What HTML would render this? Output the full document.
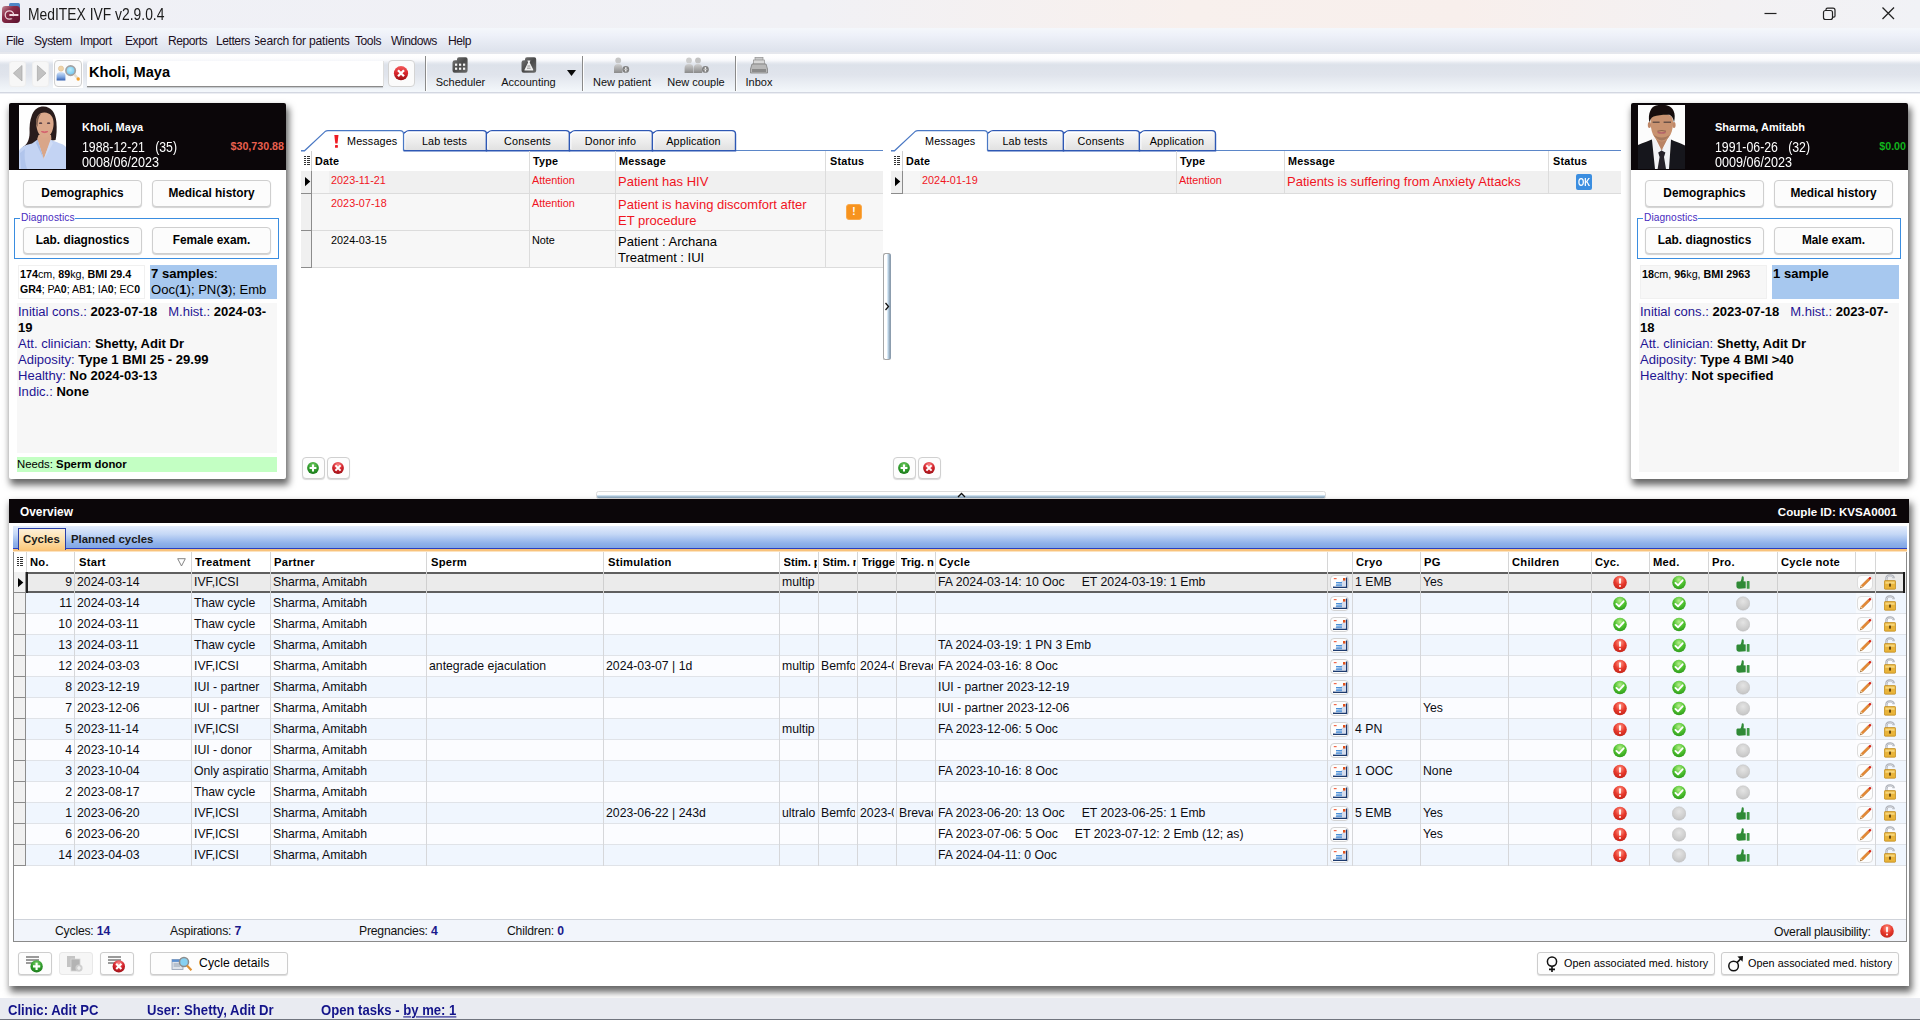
<!DOCTYPE html><html><head><meta charset="utf-8"><title>MedITEX IVF</title><style>
*{box-sizing:border-box;margin:0;padding:0}
html,body{width:1920px;height:1020px;overflow:hidden;background:#fff}
body{font-family:"Liberation Sans",sans-serif;font-size:12px;color:#000;position:relative}
.a{position:absolute;white-space:nowrap}
.t{position:absolute;white-space:nowrap;line-height:1}
.b{font-weight:bold}
.btn{position:absolute;background:#fcfcfc;border:1px solid #cfcfcf;border-radius:4px;box-shadow:0 1px 1px rgba(0,0,0,.18);text-align:center;font-weight:bold;white-space:nowrap}
.card{position:absolute;background:#fff;box-shadow:2px 5px 7px 1px rgba(0,0,0,.6)}
.hd{position:absolute;background:#0b0609}
.vl{position:absolute;width:1px;background:#d4d4d4}
.hl{position:absolute;height:1px;background:#d9d9d9}
.red{color:#f0141e}
.nv{color:#1f1493}
</style></head><body>
<svg width="0" height="0" style="position:absolute"><defs>
<radialGradient id="gR" cx="50%" cy="30%" r="70%"><stop offset="0" stop-color="#ff9a8a"/><stop offset=".55" stop-color="#e8392c"/><stop offset="1" stop-color="#c4261b"/></radialGradient>
<radialGradient id="gG" cx="50%" cy="30%" r="70%"><stop offset="0" stop-color="#b9f08f"/><stop offset=".55" stop-color="#4fc22f"/><stop offset="1" stop-color="#2f9c1c"/></radialGradient>
<radialGradient id="gY" cx="50%" cy="35%" r="70%"><stop offset="0" stop-color="#e4e4e4"/><stop offset="1" stop-color="#c2c2c2"/></radialGradient>
<radialGradient id="gG2" cx="50%" cy="30%" r="70%"><stop offset="0" stop-color="#7fd36f"/><stop offset=".6" stop-color="#2e9a2a"/><stop offset="1" stop-color="#1c7a1c"/></radialGradient>
<radialGradient id="gR2" cx="50%" cy="25%" r="75%"><stop offset="0" stop-color="#ff8c8c"/><stop offset=".55" stop-color="#d3232b"/><stop offset="1" stop-color="#9c1218"/></radialGradient>
<symbol id="iErr" viewBox="0 0 14 14"><circle cx="7" cy="7" r="6.8" fill="url(#gR)"/><rect x="6.1" y="2.8" width="1.8" height="5.6" rx=".8" fill="#fff"/><circle cx="7" cy="10.4" r="1" fill="#fff"/></symbol>
<symbol id="iOk" viewBox="0 0 14 14"><circle cx="7" cy="7" r="6.8" fill="url(#gG)"/><path d="M3.4 7.4 L6 9.8 L10.6 4.8" fill="none" stroke="#fff" stroke-width="1.9" stroke-linecap="round" stroke-linejoin="round"/></symbol>
<symbol id="iGr" viewBox="0 0 14 14"><circle cx="7" cy="7" r="6.8" fill="url(#gY)" stroke="#b9b9b9" stroke-width=".4"/></symbol>
<symbol id="iTh" viewBox="0.6 0.4 13 12.6"><path d="M1 7.2 C1 6.2 1.8 5.8 2.8 5.8 L4.6 5.8 C5.4 4.8 5.8 3.4 5.9 1.6 C5.9 .6 7.6 .4 7.8 2 C8 3.4 7.8 4.6 7.6 5.6 L9.6 5.8 L9.6 12 L3.4 12.4 C2 12.4 1 11.6 1 10.2 Z" fill="#2f8a36"/><rect x="10.6" y="5.4" width="2.6" height="7.2" rx=".5" fill="#3f9a46"/></symbol>
<symbol id="iPen" viewBox="0 0 15 15"><path d="M2.4 12.9 L3.1 10.5 L10.3 3.3 L11.9 4.9 L4.7 12.1 Z" fill="#e58a34" stroke="#c06a1c" stroke-width=".5"/><path d="M10.3 3.3 L11.5 2.1 C11.8 1.8 12.2 1.8 12.5 2.1 L13.1 2.7 C13.4 3 13.4 3.4 13.1 3.7 L11.9 4.9 Z" fill="#d62a1e"/><path d="M2.4 12.9 L3.1 10.5 L4.7 12.1 Z" fill="#f3d9a8"/><path d="M2.4 12.9 L2.75 11.7 L3.55 12.5 Z" fill="#3a2a1a"/></symbol>
<symbol id="iLock" viewBox="0 0 12 16"><path d="M2.4 7 L2.4 4.4 C2.4 .6 9.6 .6 9.6 3.6 L9.6 4.2" fill="none" stroke="#adb1b9" stroke-width="2.3"/><path d="M2.4 7 L2.4 4.4 C2.4 1.4 8.8 1 9.4 3.4" fill="none" stroke="#e4e6ea" stroke-width=".8"/><rect x=".4" y="6.6" width="11.2" height="8.6" rx=".8" fill="#e9b43a" stroke="#b98312" stroke-width=".7"/><rect x="1.4" y="7.6" width="9.2" height="2.2" fill="#f6d57a"/><rect x="5" y="9.6" width="2" height="3" fill="#6a4a10"/></symbol>
<symbol id="iCard" viewBox="0 0 19 15"><rect x=".5" y=".5" width="18" height="14" rx="3.5" fill="#fdfdfd" stroke="#d2d2d2"/><path d="M3 12.2 L16.6 12.2 L16.6 2.6" fill="none" stroke="#1c3a6e" stroke-width="1.4"/><path d="M4 11.4 L15.8 11.4 L15.8 3.6 Z" fill="#d4dced"/><rect x="6" y="7" width="6" height="1" fill="#4a90d8"/><rect x="6" y="8.6" width="6" height="1" fill="#4a90d8"/><rect x="6" y="10.2" width="6" height="1" fill="#4a90d8"/><rect x="3.8" y="3" width="2.8" height="1.2" fill="#f0684a"/><rect x="13" y="3" width="2.4" height="2.6" fill="#e0521c"/></symbol>
<symbol id="iAdd" viewBox="0 0 12 12"><circle cx="6" cy="6" r="5.9" fill="url(#gG2)"/><path d="M6 2.6 V9.4 M2.6 6 H9.4" stroke="#fff" stroke-width="2"/></symbol>
<symbol id="iDel" viewBox="0 0 12 12"><circle cx="6" cy="6" r="5.9" fill="url(#gR2)"/><path d="M3.4 3.4 L8.6 8.6 M8.6 3.4 L3.4 8.6" stroke="#fff" stroke-width="2"/></symbol>
</defs></svg>
<div class="a" style="left:0px;top:0px;width:1920px;height:28px;background:linear-gradient(90deg,#eff0f6 0,#f1f1f5 42%,#f8f0ed 62%,#f8efec 76%,#f3f1f3 90%,#f1f2f6 100%)"></div>
<svg class="a" style="left:2px;top:3px" width="19" height="21" viewBox="0 0 19 21"><rect x="7" y="0" width="11" height="6" rx="1.5" fill="#4f86c6"/><defs><linearGradient id="ai" x1="0" y1="0" x2="1" y2="1"><stop offset="0" stop-color="#c08a98"/><stop offset=".35" stop-color="#8c2c48"/><stop offset="1" stop-color="#5a102c"/></linearGradient></defs><rect x="0" y="3" width="18" height="17" rx="3.4" fill="url(#ai)"/><circle cx="7.4" cy="12" r="4.2" fill="none" stroke="#ecd2d9" stroke-width="1.3"/><rect x="7.2" y="11" width="9.4" height="2" rx=".8" fill="#efd9df"/><rect x="9.6" y="13.2" width="4" height="2.6" fill="#6c1834"/></svg>
<div class="t " style="left:27.5px;top:2.6px;height:24px;line-height:24px;font-size:15.8px;color:#1a1a1a;transform:scaleX(.878);transform-origin:0 50%">MedITEX IVF v2.9.0.4</div>
<svg class="a" style="left:1760px;top:4px" width="140" height="20"><path d="M4.5 9.5 H16.5" stroke="#222" stroke-width="1.2"/><rect x="63.5" y="6.5" width="9" height="9" rx="2" fill="none" stroke="#222" stroke-width="1.2"/><path d="M66 6.5 V5.5 Q66 4.2 67.5 4.2 H73 Q75 4.2 75 6.2 V12 Q75 13.2 73.6 13.2 H72.5" fill="none" stroke="#222" stroke-width="1.2"/><path d="M122.5 3.5 L134 15 M134 3.5 L122.5 15" stroke="#222" stroke-width="1.3"/></svg>
<div class="a" style="left:0px;top:28px;width:1920px;height:24px;background:linear-gradient(180deg,#f4f7fb 0,#eef1f9 30%,#e4e8f1 70%,#dde2ec 100%)"></div>
<div class="a" style="left:0px;top:52px;width:1920px;height:2px;background:#e5e7ed"></div>
<div class="t " style="left:6px;top:28.5px;height:24px;line-height:24px;font-size:12.1px;color:#1b0f1f;letter-spacing:-.45px">File</div>
<div class="t " style="left:34px;top:28.5px;height:24px;line-height:24px;font-size:12.1px;color:#1b0f1f;letter-spacing:-.45px">System</div>
<div class="t " style="left:80px;top:28.5px;height:24px;line-height:24px;font-size:12.1px;color:#1b0f1f;letter-spacing:-.45px">Import</div>
<div class="t " style="left:125px;top:28.5px;height:24px;line-height:24px;font-size:12.1px;color:#1b0f1f;letter-spacing:-.45px">Export</div>
<div class="t " style="left:168px;top:28.5px;height:24px;line-height:24px;font-size:12.1px;color:#1b0f1f;letter-spacing:-.45px">Reports</div>
<div class="t " style="left:216px;top:28.5px;height:24px;line-height:24px;font-size:12.1px;color:#1b0f1f;letter-spacing:-.45px">Letters</div>
<div class="t " style="left:391px;top:28.5px;height:24px;line-height:24px;font-size:12.1px;color:#1b0f1f;letter-spacing:-.45px">Windows</div>
<div class="t " style="left:448px;top:28.5px;height:24px;line-height:24px;font-size:12.1px;color:#1b0f1f;letter-spacing:-.45px">Help</div>
<div class="t " style="left:355px;top:28.5px;height:24px;line-height:24px;font-size:12.1px;color:#1b0f1f;letter-spacing:-.45px">Tools</div>
<div class="a" style="left:255px;top:29px;width:96px;height:24px;overflow:hidden"><div class="t" style="left:-3px;top:0;height:24px;line-height:24px;font-size:12.1px;letter-spacing:-.2px;color:#1b0f1f">Search for patients</div></div>
<div class="a" style="left:0px;top:54px;width:1920px;height:38px;background:linear-gradient(180deg,#fff 0,#fdfdfe 10%,#f7f8fb 17%,#e4e8ef 24%,#dde2ea 29%,#e0e4ec 55%,#e9edf3 75%,#f2f6fa 96%,#f4f8fb 100%)"></div>
<div class="a" style="left:0px;top:92px;width:1920px;height:1px;background:#d3d7e1"></div>
<div class="a" style="left:0px;top:93px;width:1920px;height:1px;background:#eceef3"></div>
<div class="a" style="left:9px;top:60.5px;width:17px;height:26px;background:#f7f7f7;border:1px solid #efefef;border-radius:3px"></div>
<div class="a" style="left:32px;top:60.5px;width:17px;height:26px;background:#f7f7f7;border:1px solid #efefef;border-radius:3px"></div>
<div class="a" style="left:53px;top:59px;width:30px;height:29px;background:#fff"></div>
<svg class="a" style="left:12px;top:64px" width="36" height="19"><path d="M10 1.5 L10 17 L1.4 9.2 Z" fill="#c2c2c2" stroke="#a8a8a8" stroke-width=".7"/><path d="M25.4 1.5 L25.4 17 L34 9.2 Z" fill="#c2c2c2" stroke="#a8a8a8" stroke-width=".7"/></svg>
<div class="a" style="left:54px;top:60px;width:28px;height:27px;background:#fbfbfb;border:1px solid #cfcfcf;border-radius:4px"></div>
<svg class="a" style="left:55px;top:63px" width="26" height="21" viewBox="0 0 26 21"><defs><linearGradient id="pb" x1="0" y1="0" x2="0" y2="1"><stop offset="0" stop-color="#d4e4f8"/><stop offset=".6" stop-color="#7fa6e0"/><stop offset="1" stop-color="#3560b0"/></linearGradient><radialGradient id="ln" cx="45%" cy="40%" r="60%"><stop offset="0" stop-color="#b8ecfc"/><stop offset="1" stop-color="#6cc4f0"/></radialGradient></defs><circle cx="6" cy="5.6" r="2.6" fill="#f0d4a8" stroke="#d8b888" stroke-width=".5"/><path d="M1.6 17.4 L1.6 12.6 Q1.6 9 6 9 Q10.4 9 10.4 12.6 L10.4 17.4 Z" fill="url(#pb)"/><circle cx="15.6" cy="7.6" r="4.7" fill="url(#ln)" stroke="#a2a2a2" stroke-width="1.7"/><path d="M19.4 11.6 L23.4 15.8" stroke="#e8e0d0" stroke-width="2.4"/><circle cx="23.2" cy="16" r="1.7" fill="#f2a02c"/></svg>
<div class="a" style="left:87px;top:61px;width:296px;height:25.4px;background:#fff;border-radius:3px 0 0 0;box-shadow:0 1px 0 #8a8a8a,0 2px 1px rgba(0,0,0,.18),1px 0 0 #e2e2e2"></div>
<div class="t b" style="left:89px;top:61px;height:23px;line-height:23px;font-size:14.6px;">Kholi, Maya</div>
<div class="a" style="left:388px;top:60px;width:27px;height:27px;background:#fbfbfb;border:1px solid #d4d4d4;border-radius:4px"></div>
<svg class="a" style="left:393px;top:65px" width="16" height="16" viewBox="0 0 16 16"><defs><linearGradient id="rx" x1="0" y1="0" x2="0" y2="1"><stop offset="0" stop-color="#f25a5a"/><stop offset=".5" stop-color="#d8262c"/><stop offset="1" stop-color="#9a1014"/></linearGradient></defs><circle cx="8" cy="8.2" r="7.1" fill="url(#rx)"/><path d="M5 5.2 L11 11.2 M11 5.2 L5 11.2" stroke="#fff" stroke-width="2.3"/></svg>
<div class="a" style="left:425px;top:56px;width:1px;height:35px;background:#8a8a8a"></div>
<div class="a" style="left:426px;top:56px;width:1px;height:35px;background:#fff"></div>
<div class="a" style="left:582px;top:56px;width:1px;height:35px;background:#8a8a8a"></div>
<div class="a" style="left:583px;top:56px;width:1px;height:35px;background:#fff"></div>
<div class="a" style="left:735px;top:56px;width:1px;height:35px;background:#8a8a8a"></div>
<div class="a" style="left:736px;top:56px;width:1px;height:35px;background:#fff"></div>
<div class="t" style="left:410.5px;width:100px;text-align:center;top:74.5px;height:14px;line-height:14px;font-size:11px;color:#111">Scheduler</div>
<div class="t" style="left:478.5px;width:100px;text-align:center;top:74.5px;height:14px;line-height:14px;font-size:11px;color:#111">Accounting</div>
<div class="t" style="left:572px;width:100px;text-align:center;top:74.5px;height:14px;line-height:14px;font-size:11px;color:#111">New patient</div>
<div class="t" style="left:646px;width:100px;text-align:center;top:74.5px;height:14px;line-height:14px;font-size:11px;color:#111">New couple</div>
<div class="t" style="left:709px;width:100px;text-align:center;top:74.5px;height:14px;line-height:14px;font-size:11px;color:#111">Inbox</div>
<svg class="a" style="left:452px;top:57px" width="16" height="16" viewBox="0 0 16 16"><defs><linearGradient id="dk" x1="0" y1="0" x2="1" y2="1"><stop offset="0" stop-color="#7a7a7a"/><stop offset=".5" stop-color="#4a4a4a"/><stop offset="1" stop-color="#6c6c6c"/></linearGradient></defs><path d="M.5 5.5 Q.5 3.2 3 3.2 L5 3.2 L5 2.2 Q5 .2 7 .2 L13.6 .2 Q15.6 .2 15.6 2.2 L15.6 13.6 Q15.6 15.8 13.4 15.8 L2.6 15.8 Q.5 15.8 .5 13.6Z" fill="url(#dk)"/><g fill="#f4f4f4"><rect x="3" y="6.6" width="2.2" height="2.2"/><rect x="7" y="6.6" width="2.2" height="2.2"/><rect x="11" y="6.6" width="2.2" height="2.2"/><rect x="3" y="10.6" width="2.2" height="2.2"/><rect x="7" y="10.6" width="2.2" height="2.2"/><rect x="11" y="10.6" width="2.2" height="2.2"/></g></svg>
<svg class="a" style="left:520.5px;top:57px" width="16" height="16" viewBox="0 0 16 16"><path d="M.5 5.5 Q.5 3.2 3 3.2 L4 3.2 L4 2.2 Q4 .2 6 .2 L13.2 .2 Q15.2 .2 15.2 2.2 L15.2 13.6 Q15.2 15.8 13 15.8 L2.6 15.8 Q.5 15.8 .5 13.6Z" fill="url(#dk)"/><path d="M6.4 3.6 L9.4 3.6 L8.7 5.4 L12.2 12.4 Q12.6 13.6 11.4 13.6 L4.2 13.6 Q3 13.6 3.6 12.4 L7.1 5.4Z" fill="#f0f0f0"/><path d="M6.4 9 H9.2 M6 11.2 H9.6" stroke="#777" stroke-width=".8"/></svg>
<svg class="a" style="left:566px;top:69px" width="11" height="8"><path d="M1 1 L10 1 L5.5 7 Z" fill="#0a0a0a"/></svg>
<svg class="a" style="left:613px;top:57px" width="20" height="18" viewBox="0 0 20 18"><defs><linearGradient id="pg" x1="0" y1="0" x2="0" y2="1"><stop offset="0" stop-color="#cfcfcf"/><stop offset="1" stop-color="#8a8a8a"/></linearGradient></defs><circle cx="5.2" cy="3.4" r="2.9" fill="#c6c6c6"/><path d="M1 16 L1 11 Q1 7 5.2 7 Q9.4 7 9.4 11 L9.4 16 Z" fill="url(#pg)"/><circle cx="12.8" cy="12.4" r="3.4" fill="#808080"/><path d="M12.8 10.2 V14.6" stroke="#f4f4f4" stroke-width="1.4"/><path d="M10.8 12.4 H14.8" stroke="#bbb" stroke-width="1"/></svg>
<svg class="a" style="left:683px;top:57px" width="27" height="18" viewBox="0 0 27 18"><circle cx="6" cy="3.4" r="2.9" fill="#cdcdcd"/><path d="M1.6 16 L1.6 11 Q1.6 7 6 7 Q10.4 7 10.4 11 L10.4 16 Z" fill="url(#pg)"/><circle cx="15" cy="3.4" r="2.9" fill="#c2c2c2"/><path d="M10.8 16 L10.8 11 Q10.8 7 15 7 Q19.2 7 19.2 11 L19.2 16 Z" fill="url(#pg)"/><circle cx="22.4" cy="12.4" r="3.4" fill="#808080"/><path d="M22.4 10.2 V14.6" stroke="#f4f4f4" stroke-width="1.4"/><path d="M20.4 12.4 H24.4" stroke="#bbb" stroke-width="1"/></svg>
<svg class="a" style="left:750px;top:57px" width="18" height="17" viewBox="0 0 18 17"><rect x="5" y=".5" width="8" height="3" fill="#c8c8c8" stroke="#909090" stroke-width=".7"/><rect x="3.5" y="3" width="11" height="4" fill="#d8d8d8" stroke="#909090" stroke-width=".7"/><path d="M2 7 L16 7 L17.5 12 L17.5 16 L.5 16 L.5 12 Z" fill="#b8b8b8" stroke="#808080" stroke-width=".8"/><rect x="2" y="12" width="14" height="3" fill="#8a8a8a"/></svg>
<div class="card" style="left:9px;top:102.7px;width:277.4px;height:376.3px;border-radius:2px"></div>
<div class="hd" style="left:9px;top:102.7px;width:277.4px;height:67.3px;border-radius:2px 2px 0 0"></div>
<svg class="a" style="left:19px;top:105px" width="47" height="64" viewBox="0 0 47 64"><defs><filter id="bl1" x="-5%" y="-5%" width="110%" height="110%"><feGaussianBlur stdDeviation=".55"/></filter><clipPath id="cp1"><rect width="47" height="64"/></clipPath></defs><rect width="47" height="64" fill="#fefefe"/><g clip-path="url(#cp1)"><g filter="url(#bl1)"><path d="M24.5 1.6 C32 1.6 36.6 8 37.4 17 C38 24 37.6 30 36.6 35 L30 36 L18 36 C16 40 10 42 3 42.5 C8 40 10.5 35 10.6 28 C10.4 22 10.6 16 13 10 C15.6 4 19.6 1.6 24.5 1.6Z" fill="#2b1d1c"/><path d="M0 64 L0 46 C2 41.5 8 39.6 13 38.6 L18.6 34.6 L24.6 54 L31.6 34.6 C36 37.4 44 38.4 47 42 L47 64Z" fill="#c3d3f3"/><path d="M6 44 C5 52 6 58 8 64 L2 64 L1 48Z" fill="#a9bfe8" opacity=".7"/><path d="M18.2 34 L19.5 30 L32 30 L32.4 34 L24.8 54Z" fill="#d9a689"/><path d="M18.6 34.6 L17 38 L24.2 53 L24.8 54Z" fill="#a7bce6"/><path d="M31.6 34.6 L34 38.6 L25.4 53.6 L24.8 54Z" fill="#cfdcf6"/><path d="M17.2 19 C16.6 12 20 7.4 25.6 7.6 C31.4 7.8 34.8 12 34.6 19 C34.4 26 31 32.8 25.8 32.8 C20.8 32.8 17.6 26 17.2 19Z" fill="#dba88b"/><path d="M17.2 19 C17 13 19 9.6 22 8.4 C19.4 12 18.6 16 18.6 22Z" fill="#2b1d1c" opacity=".55"/><ellipse cx="21.6" cy="18.2" rx="1.7" ry=".9" fill="#5a4348"/><ellipse cx="29.6" cy="18.2" rx="1.7" ry=".9" fill="#5a4348"/><path d="M22.4 26.6 Q25.6 28.6 28.8 26.6 Q25.6 27.2 22.4 26.6Z" fill="#d4606e" stroke="#d4606e" stroke-width="1"/></g></g></svg>
<div class="t b" style="left:82px;top:120px;height:14px;line-height:14px;font-size:11px;color:#fff">Kholi, Maya</div>
<div class="t " style="left:82px;top:140px;height:15px;line-height:15px;font-size:12.3px;color:#fff;transform:scaleY(1.16);transform-origin:0 50%">1988-12-21&nbsp;&nbsp;&nbsp;(35)</div>
<div class="t " style="left:82px;top:156px;height:15px;line-height:15px;font-size:12.6px;color:#fff;transform:scaleY(1.14);transform-origin:0 50%">0008/06/2023</div>
<div class="t b" style="left:184px;width:100px;text-align:right;top:139px;height:14px;line-height:14px;font-size:10.7px;color:#e9604f">$30,730.88</div>
<div class="btn" style="left:23px;top:180px;width:119px;height:27px;line-height:25px;font-size:11.85px">Demographics</div>
<div class="btn" style="left:152px;top:180px;width:119px;height:27px;line-height:25px;font-size:11.85px">Medical history</div>
<div class="a" style="left:14px;top:218px;width:265px;height:41px;border:1px solid #3a8de0"></div>
<div class="a" style="left:20px;top:212px;width:54.5px;height:11px;background:#fff"></div>
<div class="t " style="left:21px;top:211px;height:13px;line-height:13px;font-size:10.2px;color:#4a2cc0;letter-spacing:.1px">Diagnostics</div>
<div class="btn" style="left:23px;top:227px;width:119px;height:27px;line-height:25px;font-size:11.85px">Lab. diagnostics</div>
<div class="btn" style="left:152px;top:227px;width:119px;height:27px;line-height:25px;font-size:11.85px">Female exam.</div>
<div class="a" style="left:18px;top:265.4px;width:127px;height:33.6px;background:#fff;border:1px solid #f0f0f0"></div>
<div class="a" style="left:150px;top:265.4px;width:127px;height:33.6px;background:#a7c8ef"></div>
<div class="t " style="left:20px;top:267px;height:15px;line-height:15px;font-size:10.75px;"><b>174</b>cm, <b>89</b>kg, <b>BMI 29.4</b></div>
<div class="t " style="left:20px;top:282px;height:14px;line-height:14px;font-size:10.55px;"><b>GR4</b>; PA<b>0</b>; AB<b>1</b>; IA<b>0</b>; EC<b>0</b></div>
<div class="t " style="left:151px;top:266px;height:16px;line-height:16px;font-size:13.05px;"><b>7 samples</b>:</div>
<div class="t " style="left:151px;top:282px;height:16px;line-height:16px;font-size:13.05px;">Ooc(<b>1</b>); PN(<b>3</b>); Emb</div>
<div class="a" style="left:17px;top:303px;width:260px;height:150px;background:#f7f7f7"></div>
<div class="t " style="left:18px;top:304px;height:16px;line-height:16px;font-size:13.05px;"><span class="nv">Initial cons.:</span> <b>2023-07-18</b>&nbsp;&nbsp; <span class="nv">M.hist.:</span> <b>2024-03-</b></div>
<div class="t " style="left:18px;top:320px;height:16px;line-height:16px;font-size:13.05px;"><b>19</b></div>
<div class="t " style="left:18px;top:336px;height:16px;line-height:16px;font-size:13.05px;"><span class="nv">Att. clinician:</span> <b>Shetty, Adit Dr</b></div>
<div class="t " style="left:18px;top:352px;height:16px;line-height:16px;font-size:13.05px;"><span class="nv">Adiposity:</span> <b>Type 1 BMI 25 - 29.99</b></div>
<div class="t " style="left:18px;top:368px;height:16px;line-height:16px;font-size:13.05px;"><span class="nv">Healthy:</span> <b>No 2024-03-13</b></div>
<div class="t " style="left:18px;top:384px;height:16px;line-height:16px;font-size:13.05px;"><span class="nv">Indic.:</span> <b>None</b></div>
<div class="a" style="left:17px;top:457px;width:260px;height:15px;background:#c3ffc3"></div>
<div class="t " style="left:17px;top:457px;height:15px;line-height:15px;font-size:11.35px;">Needs: <b>Sperm donor</b></div>
<div class="card" style="left:1631px;top:102.7px;width:277.4px;height:376.3px;border-radius:2px"></div>
<div class="hd" style="left:1631px;top:102.7px;width:277.4px;height:67.3px;border-radius:2px 2px 0 0"></div>
<svg class="a" style="left:1638px;top:105px" width="47" height="64" viewBox="0 0 47 64"><defs><filter id="bl2" x="-5%" y="-5%" width="110%" height="110%"><feGaussianBlur stdDeviation=".55"/></filter><clipPath id="cp2"><rect width="47" height="64"/></clipPath></defs><rect width="47" height="64" fill="#fcfcfc"/><g clip-path="url(#cp2)"><g filter="url(#bl2)"><path d="M0 64 L0 40 C6 37.6 10 36.6 13.6 34.6 L23.5 46 L33 34.6 C37 36.8 42 38 47 40.6 L47 64Z" fill="#19171a"/><path d="M14 35 L16 32 L23.6 46 L31.6 32 L33 35 L31 64 L17 64Z" fill="#f2f2f5"/><path d="M16.4 31 L17.6 28 L30.4 28 L31 31 L23.6 45.6Z" fill="#b98263"/><path d="M20.2 47.6 L23.6 45.6 L27.4 47.6 L26 52 L28 64 L19.6 64 L21.6 52Z" fill="#25242a"/><path d="M12.6 18 C12 12 15 8.6 23.6 8.6 C32.4 8.6 35.4 12 35 18 C35 24 33.4 29 30.6 32.6 C28.6 35.2 26 36.6 23.8 36.6 C21.4 36.6 18.8 35.2 16.8 32.6 C14.2 29 12.8 24 12.6 18Z" fill="#c8926f"/><path d="M15.4 29.5 C17.6 33 20.6 35.4 23.8 35.4 C27 35.4 30 33 32 29.5 C30 31.4 27 32.4 23.8 32.4 C20.6 32.4 17.6 31.4 15.4 29.5Z" fill="#8a6450" opacity=".55"/><ellipse cx="11.4" cy="20" rx="1.6" ry="3" fill="#c08868"/><ellipse cx="36" cy="20" rx="1.6" ry="3" fill="#c08868"/><path d="M11.4 17.4 C9.6 9 13 1.6 18 .6 C21 -.6 27 -.6 30 .8 C35 2.4 38.4 8 36 17.4 C35.4 13 33.4 10.6 31.4 9.8 C27 9.4 20 10 15.6 11.4 C13 12.6 12.2 15 11.4 17.4Z" fill="#16110f"/><path d="M14.6 17.2 H21.6 M25.6 17.2 H33" stroke="#4a3c3a" stroke-width="1.6" opacity=".75"/><path d="M19.6 27.2 Q23.6 28.8 27.6 27.2" stroke="#b4646a" stroke-width="1.5" fill="none"/><path d="M19.4 25.8 Q23.7 24.6 28 25.8 L28 26.6 Q23.7 25.6 19.4 26.6Z" fill="#5a4034" opacity=".7"/></g></g></svg>
<div class="t b" style="left:1715px;top:120px;height:14px;line-height:14px;font-size:11px;color:#fff">Sharma, Amitabh</div>
<div class="t " style="left:1715px;top:140px;height:15px;line-height:15px;font-size:12.3px;color:#fff;transform:scaleY(1.16);transform-origin:0 50%">1991-06-26&nbsp;&nbsp;&nbsp;(32)</div>
<div class="t " style="left:1715px;top:156px;height:15px;line-height:15px;font-size:12.6px;color:#fff;transform:scaleY(1.14);transform-origin:0 50%">0009/06/2023</div>
<div class="t b" style="left:1806px;width:100px;text-align:right;top:139px;height:14px;line-height:14px;font-size:10.7px;color:#10b41c">$0.00</div>
<div class="btn" style="left:1645px;top:180px;width:119px;height:27px;line-height:25px;font-size:11.85px">Demographics</div>
<div class="btn" style="left:1774px;top:180px;width:119px;height:27px;line-height:25px;font-size:11.85px">Medical history</div>
<div class="a" style="left:1637px;top:218px;width:264px;height:41px;border:1px solid #3a8de0"></div>
<div class="a" style="left:1643px;top:212px;width:54.5px;height:11px;background:#fff"></div>
<div class="t " style="left:1644px;top:211px;height:13px;line-height:13px;font-size:10.2px;color:#4a2cc0;letter-spacing:.1px">Diagnostics</div>
<div class="btn" style="left:1645px;top:227px;width:119px;height:27px;line-height:25px;font-size:11.85px">Lab. diagnostics</div>
<div class="btn" style="left:1774px;top:227px;width:119px;height:27px;line-height:25px;font-size:11.85px">Male exam.</div>
<div class="a" style="left:1640px;top:265.4px;width:127px;height:33.6px;background:#f7f7f7;border:1px solid #f0f0f0"></div>
<div class="a" style="left:1772px;top:265.4px;width:127px;height:33.6px;background:#a7c8ef"></div>
<div class="t " style="left:1642px;top:267px;height:15px;line-height:15px;font-size:10.75px;"><b>18</b>cm, <b>96</b>kg, <b>BMI 2963</b></div>
<div class="t " style="left:1773px;top:266px;height:16px;line-height:16px;font-size:13.05px;"><b>1 sample</b></div>
<div class="a" style="left:1639px;top:303px;width:260px;height:169px;background:#f7f7f7"></div>
<div class="t " style="left:1640px;top:304px;height:16px;line-height:16px;font-size:13.05px;"><span class="nv">Initial cons.:</span> <b>2023-07-18</b>&nbsp;&nbsp; <span class="nv">M.hist.:</span> <b>2023-07-</b></div>
<div class="t " style="left:1640px;top:320px;height:16px;line-height:16px;font-size:13.05px;"><b>18</b></div>
<div class="t " style="left:1640px;top:336px;height:16px;line-height:16px;font-size:13.05px;"><span class="nv">Att. clinician:</span> <b>Shetty, Adit Dr</b></div>
<div class="t " style="left:1640px;top:352px;height:16px;line-height:16px;font-size:13.05px;"><span class="nv">Adiposity:</span> <b>Type 4 BMI &gt;40</b></div>
<div class="t " style="left:1640px;top:368px;height:16px;line-height:16px;font-size:13.05px;"><span class="nv">Healthy:</span> <b>Not specified</b></div>
<div class="a" style="left:301px;top:150px;width:582px;height:1px;background:#5b86c8"></div>
<svg class="a" style="left:301px;top:127.7px" width="437" height="25"><defs><linearGradient id="tg301" x1="0" y1="0" x2="0" y2="1"><stop offset="0" stop-color="#fbfbfb"/><stop offset=".45" stop-color="#efefef"/><stop offset="1" stop-color="#e0e0e0"/></linearGradient></defs><path d="M102.5 22.8 L102.5 5.5 L104.5 4.2 Q106 2.6 108 2.6 L182 2.6 Q185.5 2.6 185.5 6 L185.5 22.8 Z" fill="url(#tg301)" stroke="#2e58b4" stroke-width="1.4"/><path d="M103.8 21.3 L103.8 6.4 L106 4.2 L182 4.2" fill="none" stroke="#fff" stroke-width="1.1"/><path d="M185.5 22.8 L185.5 5.5 L187.5 4.2 Q189 2.6 191 2.6 L265 2.6 Q268.5 2.6 268.5 6 L268.5 22.8 Z" fill="url(#tg301)" stroke="#2e58b4" stroke-width="1.4"/><path d="M186.8 21.3 L186.8 6.4 L189 4.2 L265 4.2" fill="none" stroke="#fff" stroke-width="1.1"/><path d="M268.5 22.8 L268.5 5.5 L270.5 4.2 Q272 2.6 274 2.6 L348 2.6 Q351.5 2.6 351.5 6 L351.5 22.8 Z" fill="url(#tg301)" stroke="#2e58b4" stroke-width="1.4"/><path d="M269.8 21.3 L269.8 6.4 L272 4.2 L348 4.2" fill="none" stroke="#fff" stroke-width="1.1"/><path d="M351.5 22.8 L351.5 5.5 L353.5 4.2 Q355 2.6 357 2.6 L431 2.6 Q434.5 2.6 434.5 6 L434.5 22.8 Z" fill="url(#tg301)" stroke="#2e58b4" stroke-width="1.4"/><path d="M352.8 21.3 L352.8 6.4 L355 4.2 L431 4.2" fill="none" stroke="#fff" stroke-width="1.1"/><path d="M0 22.8 L3.5 22.8 L24 3.6 Q25.4 2.6 27 2.6 L99 2.6 Q102.5 2.6 102.5 6 L102.5 24.2 L0 24.2Z" fill="#fff" stroke="none"/><path d="M0 22.8 L3.5 22.8 L24 3.6 Q25.4 2.6 27 2.6 L99 2.6 Q102.5 2.6 102.5 6 L102.5 22.8" fill="none" stroke="#4a78c4" stroke-width="1.2"/></svg>
<svg class="a" style="left:333.6px;top:135px" width="5" height="13"><path d="M.3 0 H4.5 L3.5 8.6 H1.3 Z" fill="#ee1c24"/><rect x="1" y="10" width="2.9" height="2.8" rx=".6" fill="#ee1c24"/></svg>
<div class="t " style="left:347px;top:133.1px;height:17px;line-height:17px;font-size:10.8px;letter-spacing:.15px">Messages</div>
<div class="t" style="left:403px;width:83px;text-align:center;top:133.1px;height:17px;line-height:17px;font-size:10.8px;letter-spacing:.15px">Lab tests</div>
<div class="t" style="left:486px;width:83px;text-align:center;top:133.1px;height:17px;line-height:17px;font-size:10.8px;letter-spacing:.15px">Consents</div>
<div class="t" style="left:569px;width:83px;text-align:center;top:133.1px;height:17px;line-height:17px;font-size:10.8px;letter-spacing:.15px">Donor info</div>
<div class="t" style="left:652px;width:83px;text-align:center;top:133.1px;height:17px;line-height:17px;font-size:10.8px;letter-spacing:.15px">Application</div>
<div class="a" style="left:891px;top:150px;width:730px;height:1px;background:#5b86c8"></div>
<svg class="a" style="left:891px;top:127.7px" width="327" height="25"><defs><linearGradient id="tg891" x1="0" y1="0" x2="0" y2="1"><stop offset="0" stop-color="#fbfbfb"/><stop offset=".45" stop-color="#efefef"/><stop offset="1" stop-color="#e0e0e0"/></linearGradient></defs><path d="M96.5 22.8 L96.5 5.5 L98.5 4.2 Q100 2.6 102 2.6 L169 2.6 Q172.5 2.6 172.5 6 L172.5 22.8 Z" fill="url(#tg891)" stroke="#2e58b4" stroke-width="1.4"/><path d="M97.8 21.3 L97.8 6.4 L100 4.2 L169 4.2" fill="none" stroke="#fff" stroke-width="1.1"/><path d="M172.5 22.8 L172.5 5.5 L174.5 4.2 Q176 2.6 178 2.6 L245 2.6 Q248.5 2.6 248.5 6 L248.5 22.8 Z" fill="url(#tg891)" stroke="#2e58b4" stroke-width="1.4"/><path d="M173.8 21.3 L173.8 6.4 L176 4.2 L245 4.2" fill="none" stroke="#fff" stroke-width="1.1"/><path d="M248.5 22.8 L248.5 5.5 L250.5 4.2 Q252 2.6 254 2.6 L321 2.6 Q324.5 2.6 324.5 6 L324.5 22.8 Z" fill="url(#tg891)" stroke="#2e58b4" stroke-width="1.4"/><path d="M249.8 21.3 L249.8 6.4 L252 4.2 L321 4.2" fill="none" stroke="#fff" stroke-width="1.1"/><path d="M0 22.8 L3.5 22.8 L24 3.6 Q25.4 2.6 27 2.6 L93 2.6 Q96.5 2.6 96.5 6 L96.5 24.2 L0 24.2Z" fill="#fff" stroke="none"/><path d="M0 22.8 L3.5 22.8 L24 3.6 Q25.4 2.6 27 2.6 L93 2.6 Q96.5 2.6 96.5 6 L96.5 22.8" fill="none" stroke="#4a78c4" stroke-width="1.2"/></svg>
<div class="t " style="left:925px;top:133.1px;height:17px;line-height:17px;font-size:10.8px;letter-spacing:.15px">Messages</div>
<div class="t" style="left:987px;width:76px;text-align:center;top:133.1px;height:17px;line-height:17px;font-size:10.8px;letter-spacing:.15px">Lab tests</div>
<div class="t" style="left:1063px;width:76px;text-align:center;top:133.1px;height:17px;line-height:17px;font-size:10.8px;letter-spacing:.15px">Consents</div>
<div class="t" style="left:1139px;width:76px;text-align:center;top:133.1px;height:17px;line-height:17px;font-size:10.8px;letter-spacing:.15px">Application</div>
<svg class="a" style="left:302.6px;top:156px" width="8" height="10"><path d="M1 .5H3M4 .5H7M1 2.5H3M4 2.5H7M1 4.5H3M4 4.5H7M1 6.5H3M4 6.5H7M1 8.5H3M4 8.5H7" stroke="#333" stroke-width="1"/></svg>
<div class="a" style="left:311px;top:151px;width:1px;height:21px;background:#cfcfcf"></div>
<div class="t b" style="left:315px;top:153px;height:17px;line-height:17px;font-size:10.8px;letter-spacing:.2px">Date</div>
<div class="t b" style="left:533px;top:153px;height:17px;line-height:17px;font-size:10.8px;letter-spacing:.2px">Type</div>
<div class="t b" style="left:619px;top:153px;height:17px;line-height:17px;font-size:10.8px;letter-spacing:.2px">Message</div>
<div class="t b" style="left:830px;top:153px;height:17px;line-height:17px;font-size:10.8px;letter-spacing:.2px">Status</div>
<div class="a" style="left:529px;top:151px;width:1px;height:20px;background:#dcdcdc"></div>
<div class="a" style="left:615px;top:151px;width:1px;height:20px;background:#dcdcdc"></div>
<div class="a" style="left:825px;top:151px;width:1px;height:20px;background:#dcdcdc"></div>
<div class="a" style="left:312px;top:171.4px;width:571px;height:22.6px;background:#f0f0f0"></div>
<div class="a" style="left:301px;top:171.4px;width:11px;height:22.6px;background:#f0f0f0;border-right:1px solid #8c8c8c;border-bottom:1px solid #8c8c8c"></div>
<svg class="a" style="left:304px;top:176.4px" width="7" height="11"><path d="M1 .9 L6.3 5.6 L1 10.3Z" fill="#000"/></svg>
<div class="a" style="left:312px;top:171.4px;width:17px;height:22.6px;background:#f6f6f6"></div>
<div class="a" style="left:301px;top:193.0px;width:582px;height:1px;background:#dcdcdc"></div>
<div class="a" style="left:301px;top:193.0px;width:11px;height:1px;background:#8c8c8c"></div>
<div class="a" style="left:529px;top:171.4px;width:1px;height:22.6px;background:#dcdcdc"></div>
<div class="a" style="left:615px;top:171.4px;width:1px;height:22.6px;background:#dcdcdc"></div>
<div class="a" style="left:825px;top:171.4px;width:1px;height:22.6px;background:#dcdcdc"></div>
<div class="t " style="left:331px;top:173.4px;height:15px;line-height:15px;font-size:10.8px;color:#f0141e;letter-spacing:.05px">2023-11-21</div>
<div class="t " style="left:532px;top:173.4px;height:15px;line-height:15px;font-size:10.85px;color:#f0141e;">Attention</div>
<div class="t " style="left:618px;top:174.4px;height:16px;line-height:16px;font-size:13px;color:#f0141e;">Patient has HIV</div>
<div class="a" style="left:312px;top:194.0px;width:571px;height:37px;background:#f7f7f7"></div>
<div class="a" style="left:301px;top:194.0px;width:11px;height:37px;background:#f0f0f0;border-right:1px solid #8c8c8c;border-bottom:1px solid #8c8c8c"></div>
<div class="a" style="left:301px;top:230.0px;width:582px;height:1px;background:#dcdcdc"></div>
<div class="a" style="left:301px;top:230.0px;width:11px;height:1px;background:#8c8c8c"></div>
<div class="a" style="left:529px;top:194.0px;width:1px;height:37px;background:#dcdcdc"></div>
<div class="a" style="left:615px;top:194.0px;width:1px;height:37px;background:#dcdcdc"></div>
<div class="a" style="left:825px;top:194.0px;width:1px;height:37px;background:#dcdcdc"></div>
<div class="t " style="left:331px;top:196.0px;height:15px;line-height:15px;font-size:10.8px;color:#f0141e;letter-spacing:.05px">2023-07-18</div>
<div class="t " style="left:532px;top:196.0px;height:15px;line-height:15px;font-size:10.85px;color:#f0141e;">Attention</div>
<div class="t " style="left:618px;top:197.0px;height:16px;line-height:16px;font-size:13px;color:#f0141e;">Patient is having discomfort after</div>
<div class="t " style="left:618px;top:213.0px;height:16px;line-height:16px;font-size:13px;color:#f0141e;">ET procedure</div>
<div class="a" style="left:846px;top:204px;width:16px;height:16px;background:#f7931e;border-radius:3px;border:1px solid #f9a94a;color:#fff;font-weight:bold;font-size:10px;line-height:14px;text-align:center">!</div>
<div class="a" style="left:312px;top:231.0px;width:571px;height:37px;background:#f7f7f7"></div>
<div class="a" style="left:301px;top:231.0px;width:11px;height:37px;background:#f0f0f0;border-right:1px solid #8c8c8c;border-bottom:1px solid #8c8c8c"></div>
<div class="a" style="left:301px;top:267.0px;width:582px;height:1px;background:#dcdcdc"></div>
<div class="a" style="left:301px;top:267.0px;width:11px;height:1px;background:#8c8c8c"></div>
<div class="a" style="left:529px;top:231.0px;width:1px;height:37px;background:#dcdcdc"></div>
<div class="a" style="left:615px;top:231.0px;width:1px;height:37px;background:#dcdcdc"></div>
<div class="a" style="left:825px;top:231.0px;width:1px;height:37px;background:#dcdcdc"></div>
<div class="t " style="left:331px;top:233.0px;height:15px;line-height:15px;font-size:10.8px;letter-spacing:.05px">2024-03-15</div>
<div class="t " style="left:532px;top:233.0px;height:15px;line-height:15px;font-size:10.85px;">Note</div>
<div class="t " style="left:618px;top:234.0px;height:16px;line-height:16px;font-size:13px;">Patient : Archana</div>
<div class="t " style="left:618px;top:250.0px;height:16px;line-height:16px;font-size:13px;">Treatment : IUI</div>
<svg class="a" style="left:892.6px;top:156px" width="8" height="10"><path d="M1 .5H3M4 .5H7M1 2.5H3M4 2.5H7M1 4.5H3M4 4.5H7M1 6.5H3M4 6.5H7M1 8.5H3M4 8.5H7" stroke="#333" stroke-width="1"/></svg>
<div class="a" style="left:902px;top:151px;width:1px;height:21px;background:#cfcfcf"></div>
<div class="t b" style="left:906px;top:153px;height:17px;line-height:17px;font-size:10.8px;letter-spacing:.2px">Date</div>
<div class="t b" style="left:1180px;top:153px;height:17px;line-height:17px;font-size:10.8px;letter-spacing:.2px">Type</div>
<div class="t b" style="left:1288px;top:153px;height:17px;line-height:17px;font-size:10.8px;letter-spacing:.2px">Message</div>
<div class="t b" style="left:1553px;top:153px;height:17px;line-height:17px;font-size:10.8px;letter-spacing:.2px">Status</div>
<div class="a" style="left:1176px;top:151px;width:1px;height:20px;background:#dcdcdc"></div>
<div class="a" style="left:1284px;top:151px;width:1px;height:20px;background:#dcdcdc"></div>
<div class="a" style="left:1548px;top:151px;width:1px;height:20px;background:#dcdcdc"></div>
<div class="a" style="left:903px;top:171.4px;width:718px;height:22.6px;background:#f0f0f0"></div>
<div class="a" style="left:891px;top:171.4px;width:12px;height:22.6px;background:#f0f0f0;border-right:1px solid #8c8c8c;border-bottom:1px solid #8c8c8c"></div>
<svg class="a" style="left:894px;top:176.4px" width="7" height="11"><path d="M1 .9 L6.3 5.6 L1 10.3Z" fill="#000"/></svg>
<div class="a" style="left:903px;top:171.4px;width:17px;height:22.6px;background:#f6f6f6"></div>
<div class="a" style="left:891px;top:193.0px;width:730px;height:1px;background:#dcdcdc"></div>
<div class="a" style="left:891px;top:193.0px;width:12px;height:1px;background:#8c8c8c"></div>
<div class="a" style="left:1176px;top:171.4px;width:1px;height:22.6px;background:#dcdcdc"></div>
<div class="a" style="left:1284px;top:171.4px;width:1px;height:22.6px;background:#dcdcdc"></div>
<div class="a" style="left:1548px;top:171.4px;width:1px;height:22.6px;background:#dcdcdc"></div>
<div class="t " style="left:922px;top:173.4px;height:15px;line-height:15px;font-size:10.8px;color:#f0141e;letter-spacing:.05px">2024-01-19</div>
<div class="t " style="left:1179px;top:173.4px;height:15px;line-height:15px;font-size:10.85px;color:#f0141e;">Attention</div>
<div class="t " style="left:1287px;top:174.4px;height:16px;line-height:16px;font-size:13px;color:#f0141e;">Patients is suffering from Anxiety Attacks</div>
<div class="a" style="left:1576px;top:174.3px;width:16px;height:16px;background:#3b8ee0;border-radius:2px;color:#fff;font-weight:bold;font-size:10.6px;line-height:16.4px;text-align:center"><span style="display:inline-block;transform:scaleX(.76)">OK</span></div>
<div class="a" style="left:883px;top:253px;width:8px;height:107px;background:linear-gradient(90deg,#fff 0,#fff 45%,#d3e6f5 60%,#9fb7cb 85%,#8c9dae 100%);border:1px solid #a6a6a6;border-right-color:#8c9dae;border-radius:2.5px"></div>
<svg class="a" style="left:884px;top:302px" width="6" height="9"><path d="M1.5 1 L4.5 4.5 L1.5 8" fill="none" stroke="#111" stroke-width="1.3"/></svg>
<div class="a" style="left:302px;top:457px;width:23px;height:22px;background:#fdfdfd;border:1px solid #d0d0d0;border-radius:4px;box-shadow:0 1px 1px rgba(0,0,0,.15)"></div>
<svg class="a" style="left:307px;top:462px" width="12" height="12"><use href="#iAdd"/></svg>
<div class="a" style="left:327px;top:457px;width:23px;height:22px;background:#fdfdfd;border:1px solid #d0d0d0;border-radius:4px;box-shadow:0 1px 1px rgba(0,0,0,.15)"></div>
<svg class="a" style="left:332px;top:462px" width="12" height="12"><use href="#iDel"/></svg>
<div class="a" style="left:893px;top:457px;width:23px;height:22px;background:#fdfdfd;border:1px solid #d0d0d0;border-radius:4px;box-shadow:0 1px 1px rgba(0,0,0,.15)"></div>
<svg class="a" style="left:898px;top:462px" width="12" height="12"><use href="#iAdd"/></svg>
<div class="a" style="left:918px;top:457px;width:23px;height:22px;background:#fdfdfd;border:1px solid #d0d0d0;border-radius:4px;box-shadow:0 1px 1px rgba(0,0,0,.15)"></div>
<svg class="a" style="left:923px;top:462px" width="12" height="12"><use href="#iDel"/></svg>
<div class="a" style="left:596px;top:491px;width:730px;height:8px;background:linear-gradient(180deg,#fff 0,#fff 42%,#d6e8f5 55%,#9cb6cc 80%,#8ba4ba 100%);border:1px solid #dcdcdc;border-radius:2.5px"></div>
<svg class="a" style="left:957px;top:492px" width="9" height="6"><path d="M1 5 L4.5 1.5 L8 5" fill="none" stroke="#111" stroke-width="1.3"/></svg>
<div class="card" style="left:9px;top:499px;width:1900px;height:487px;"></div>
<div class="hd" style="left:9px;top:499px;width:1900px;height:24px;"></div>
<div class="t b" style="left:20px;top:505px;height:15px;line-height:15px;font-size:11.9px;color:#fff">Overview</div>
<div class="t b" style="left:1697px;width:200px;text-align:right;top:504px;height:15px;line-height:15px;font-size:11.6px;color:#fff">Couple ID: KVSA0001</div>
<div class="a" style="left:13px;top:526px;width:1894px;height:23px;background:linear-gradient(180deg,#e3ecfb 0,#c5d8f6 35%,#8fb1ea 75%,#7ea4e4 100%)"></div>
<div class="a" style="left:13px;top:548px;width:1894px;height:1px;background:#2a3fc0"></div>
<div class="a" style="left:13px;top:549px;width:1894px;height:2px;background:#f8c27c"></div>
<div class="a" style="left:13px;top:551px;width:1894px;height:1px;background:#fce3c0"></div>
<div class="a" style="left:18px;top:528px;width:48px;height:22px;background:linear-gradient(180deg,#fdf0d8 0,#fde0ac 50%,#fbc77a 100%);border:1px solid #2a3fa8;border-bottom:none"></div>
<div class="t b" style="left:23px;top:532px;height:15px;line-height:15px;font-size:11.4px;color:#1a1a1a">Cycles</div>
<div class="t b" style="left:71px;top:532px;height:15px;line-height:15px;font-size:11.4px;color:#1a1a1a">Planned cycles</div>
<div class="a" style="left:13px;top:552px;width:1894px;height:390px;border:1px solid #8a8a8a;border-top:none;background:#fff"></div>
<svg class="a" style="left:16px;top:557px" width="8" height="10"><path d="M1 .5H3M4 .5H7M1 2.5H3M4 2.5H7M1 4.5H3M4 4.5H7M1 6.5H3M4 6.5H7M1 8.5H3M4 8.5H7" stroke="#333" stroke-width="1"/></svg>
<div class="t b" style="left:30px;top:554px;height:17px;line-height:17px;width:42px;overflow:hidden;font-size:11.2px;letter-spacing:.25px">No.</div>
<div class="t b" style="left:79px;top:554px;height:17px;line-height:17px;width:110px;overflow:hidden;font-size:11.2px;letter-spacing:.25px">Start</div>
<div class="t b" style="left:195px;top:554px;height:17px;line-height:17px;width:73px;overflow:hidden;font-size:11.2px;letter-spacing:.25px">Treatment</div>
<div class="t b" style="left:274px;top:554px;height:17px;line-height:17px;width:150px;overflow:hidden;font-size:11.2px;letter-spacing:.25px">Partner</div>
<div class="t b" style="left:431px;top:554px;height:17px;line-height:17px;width:170px;overflow:hidden;font-size:11.2px;letter-spacing:.25px">Sperm</div>
<div class="t b" style="left:608px;top:554px;height:17px;line-height:17px;width:169px;overflow:hidden;font-size:11.2px;letter-spacing:.25px">Stimulation</div>
<div class="t b" style="left:783.6px;top:554px;height:17px;line-height:17px;width:33.5px;overflow:hidden;font-size:11.2px;letter-spacing:-.05px">Stim. p</div>
<div class="t b" style="left:822.6px;top:554px;height:17px;line-height:17px;width:33.5px;overflow:hidden;font-size:11.2px;letter-spacing:-.05px">Stim. m</div>
<div class="t b" style="left:861.6px;top:554px;height:17px;line-height:17px;width:33.5px;overflow:hidden;font-size:11.2px;letter-spacing:-.05px">Trigger</div>
<div class="t b" style="left:900.6px;top:554px;height:17px;line-height:17px;width:33.5px;overflow:hidden;font-size:11.2px;letter-spacing:-.05px">Trig. n</div>
<div class="t b" style="left:939px;top:554px;height:17px;line-height:17px;width:386px;overflow:hidden;font-size:11.2px;letter-spacing:.25px">Cycle</div>
<div class="t b" style="left:1356px;top:554px;height:17px;line-height:17px;width:62px;overflow:hidden;font-size:11.2px;letter-spacing:.25px">Cryo</div>
<div class="t b" style="left:1424px;top:554px;height:17px;line-height:17px;width:82px;overflow:hidden;font-size:11.2px;letter-spacing:.25px">PG</div>
<div class="t b" style="left:1512px;top:554px;height:17px;line-height:17px;width:77px;overflow:hidden;font-size:11.2px;letter-spacing:.25px">Children</div>
<div class="t b" style="left:1595px;top:554px;height:17px;line-height:17px;width:52px;overflow:hidden;font-size:11.2px;letter-spacing:.25px">Cyc.</div>
<div class="t b" style="left:1653px;top:554px;height:17px;line-height:17px;width:53px;overflow:hidden;font-size:11.2px;letter-spacing:.25px">Med.</div>
<div class="t b" style="left:1712px;top:554px;height:17px;line-height:17px;width:63px;overflow:hidden;font-size:11.2px;letter-spacing:.25px">Pro.</div>
<div class="t b" style="left:1781px;top:554px;height:17px;line-height:17px;width:72px;overflow:hidden;font-size:11.2px;letter-spacing:.25px">Cycle note</div>
<svg class="a" style="left:177px;top:558px" width="9" height="9"><path d="M.7 .7 L8.3 .7 L4.5 8Z" fill="#fff" stroke="#777" stroke-width=".9"/></svg>
<div class="a" style="left:26px;top:552px;width:1px;height:20px;background:#d6d6d6"></div>
<div class="a" style="left:74px;top:552px;width:1px;height:20px;background:#d6d6d6"></div>
<div class="a" style="left:191px;top:552px;width:1px;height:20px;background:#d6d6d6"></div>
<div class="a" style="left:270px;top:552px;width:1px;height:20px;background:#d6d6d6"></div>
<div class="a" style="left:426px;top:552px;width:1px;height:20px;background:#d6d6d6"></div>
<div class="a" style="left:603px;top:552px;width:1px;height:20px;background:#d6d6d6"></div>
<div class="a" style="left:779px;top:552px;width:1px;height:20px;background:#d6d6d6"></div>
<div class="a" style="left:818px;top:552px;width:1px;height:20px;background:#d6d6d6"></div>
<div class="a" style="left:857px;top:552px;width:1px;height:20px;background:#d6d6d6"></div>
<div class="a" style="left:896px;top:552px;width:1px;height:20px;background:#d6d6d6"></div>
<div class="a" style="left:935px;top:552px;width:1px;height:20px;background:#d6d6d6"></div>
<div class="a" style="left:1327px;top:552px;width:1px;height:20px;background:#d6d6d6"></div>
<div class="a" style="left:1352px;top:552px;width:1px;height:20px;background:#d6d6d6"></div>
<div class="a" style="left:1420px;top:552px;width:1px;height:20px;background:#d6d6d6"></div>
<div class="a" style="left:1508px;top:552px;width:1px;height:20px;background:#d6d6d6"></div>
<div class="a" style="left:1591px;top:552px;width:1px;height:20px;background:#d6d6d6"></div>
<div class="a" style="left:1649px;top:552px;width:1px;height:20px;background:#d6d6d6"></div>
<div class="a" style="left:1708px;top:552px;width:1px;height:20px;background:#d6d6d6"></div>
<div class="a" style="left:1777px;top:552px;width:1px;height:20px;background:#d6d6d6"></div>
<div class="a" style="left:1855px;top:552px;width:1px;height:20px;background:#d6d6d6"></div>
<div class="a" style="left:1875px;top:552px;width:1px;height:20px;background:#d6d6d6"></div>
<div class="a" style="left:26px;top:572px;width:1880px;height:21px;background:#ebebeb"></div>
<div class="a" style="left:14px;top:572px;width:12px;height:21px;background:#f0f0f0;border-right:1px solid #8c8c8c;border-bottom:1px solid #8c8c8c"></div>
<div class="a" style="left:26px;top:592px;width:1880px;height:1px;background:#e0e3e8"></div>
<div class="a" style="left:74px;top:572px;width:1px;height:21px;background:#d6d7da"></div>
<div class="a" style="left:191px;top:572px;width:1px;height:21px;background:#d6d7da"></div>
<div class="a" style="left:270px;top:572px;width:1px;height:21px;background:#d6d7da"></div>
<div class="a" style="left:426px;top:572px;width:1px;height:21px;background:#d6d7da"></div>
<div class="a" style="left:603px;top:572px;width:1px;height:21px;background:#d6d7da"></div>
<div class="a" style="left:779px;top:572px;width:1px;height:21px;background:#d6d7da"></div>
<div class="a" style="left:818px;top:572px;width:1px;height:21px;background:#d6d7da"></div>
<div class="a" style="left:857px;top:572px;width:1px;height:21px;background:#d6d7da"></div>
<div class="a" style="left:896px;top:572px;width:1px;height:21px;background:#d6d7da"></div>
<div class="a" style="left:935px;top:572px;width:1px;height:21px;background:#d6d7da"></div>
<div class="a" style="left:1327px;top:572px;width:1px;height:21px;background:#d6d7da"></div>
<div class="a" style="left:1352px;top:572px;width:1px;height:21px;background:#d6d7da"></div>
<div class="a" style="left:1420px;top:572px;width:1px;height:21px;background:#d6d7da"></div>
<div class="a" style="left:1508px;top:572px;width:1px;height:21px;background:#d6d7da"></div>
<div class="a" style="left:1591px;top:572px;width:1px;height:21px;background:#d6d7da"></div>
<div class="a" style="left:1649px;top:572px;width:1px;height:21px;background:#d6d7da"></div>
<div class="a" style="left:1708px;top:572px;width:1px;height:21px;background:#d6d7da"></div>
<div class="a" style="left:1777px;top:572px;width:1px;height:21px;background:#d6d7da"></div>
<div class="a" style="left:1875px;top:572px;width:1px;height:21px;background:#d6d7da"></div>
<svg class="a" style="left:17px;top:577px" width="7" height="11"><path d="M1 .9 L6.3 5.6 L1 10.3Z" fill="#000"/></svg>
<div class="t" style="left:27px;top:572.4px;width:45.4px;height:20px;line-height:20px;overflow:hidden;font-size:12.25px;color:#0c0c12;text-align:right;padding-right:.4px;">9</div>
<div class="t" style="left:75px;top:572.4px;width:114.4px;height:20px;line-height:20px;overflow:hidden;font-size:12.25px;color:#0c0c12;padding-left:2px;">2024-03-14</div>
<div class="t" style="left:192px;top:572.4px;width:76.4px;height:20px;line-height:20px;overflow:hidden;font-size:12.25px;color:#0c0c12;padding-left:2px;">IVF,ICSI</div>
<div class="t" style="left:271px;top:572.4px;width:153.4px;height:20px;line-height:20px;overflow:hidden;font-size:12.25px;color:#0c0c12;padding-left:2px;">Sharma, Amitabh</div>
<div class="t" style="left:780px;top:572.4px;width:36.4px;height:20px;line-height:20px;overflow:hidden;font-size:12.25px;color:#0c0c12;padding-left:2px;">multip</div>
<div class="t" style="left:936px;top:572.4px;width:389.4px;height:20px;line-height:20px;overflow:hidden;font-size:12.25px;color:#0c0c12;padding-left:2px;">FA 2024-03-14: 10 Ooc&nbsp;&nbsp;&nbsp;&nbsp; ET 2024-03-19: 1 Emb</div>
<div class="t" style="left:1353px;top:572.4px;width:65.4px;height:20px;line-height:20px;overflow:hidden;font-size:12.25px;color:#0c0c12;padding-left:2px;">1 EMB</div>
<div class="t" style="left:1421px;top:572.4px;width:85.4px;height:20px;line-height:20px;overflow:hidden;font-size:12.25px;color:#0c0c12;padding-left:2px;">Yes</div>
<svg class="a" style="left:1330px;top:575px" width="19" height="15"><use href="#iCard"/></svg>
<svg class="a" style="left:1613px;top:575px" width="14" height="15"><use href="#iErr"/></svg>
<svg class="a" style="left:1672px;top:575px" width="14" height="15"><use href="#iOk"/></svg>
<svg class="a" style="left:1736px;top:575px" width="14" height="15"><use href="#iTh"/></svg>
<div class="a" style="left:1857px;top:575px;width:16px;height:15px;background:#fdfdfd;border:1px solid #dcdcdc;border-radius:4px"></div>
<svg class="a" style="left:1858px;top:575px" width="15" height="15"><use href="#iPen"/></svg>
<svg class="a" style="left:1884px;top:574px" width="12" height="16"><use href="#iLock"/></svg>
<div class="a" style="left:26px;top:572px;width:1879px;height:2px;background:#5f5f5f"></div>
<div class="a" style="left:26px;top:591px;width:1879px;height:2px;background:#5f5f5f"></div>
<div class="a" style="left:26px;top:572px;width:1.6px;height:21px;background:#222"></div>
<div class="a" style="left:1903.4px;top:572px;width:1.6px;height:21px;background:#1a1a1a"></div>
<div class="a" style="left:74px;top:572px;width:1px;height:21px;background:#cfcfcf"></div>
<div class="a" style="left:191px;top:572px;width:1px;height:21px;background:#cfcfcf"></div>
<div class="a" style="left:270px;top:572px;width:1px;height:21px;background:#cfcfcf"></div>
<div class="a" style="left:426px;top:572px;width:1px;height:21px;background:#cfcfcf"></div>
<div class="a" style="left:603px;top:572px;width:1px;height:21px;background:#cfcfcf"></div>
<div class="a" style="left:779px;top:572px;width:1px;height:21px;background:#cfcfcf"></div>
<div class="a" style="left:818px;top:572px;width:1px;height:21px;background:#cfcfcf"></div>
<div class="a" style="left:857px;top:572px;width:1px;height:21px;background:#cfcfcf"></div>
<div class="a" style="left:896px;top:572px;width:1px;height:21px;background:#cfcfcf"></div>
<div class="a" style="left:935px;top:572px;width:1px;height:21px;background:#cfcfcf"></div>
<div class="a" style="left:1327px;top:572px;width:1px;height:21px;background:#cfcfcf"></div>
<div class="a" style="left:1352px;top:572px;width:1px;height:21px;background:#cfcfcf"></div>
<div class="a" style="left:1420px;top:572px;width:1px;height:21px;background:#cfcfcf"></div>
<div class="a" style="left:1508px;top:572px;width:1px;height:21px;background:#cfcfcf"></div>
<div class="a" style="left:1591px;top:572px;width:1px;height:21px;background:#cfcfcf"></div>
<div class="a" style="left:1649px;top:572px;width:1px;height:21px;background:#cfcfcf"></div>
<div class="a" style="left:1708px;top:572px;width:1px;height:21px;background:#cfcfcf"></div>
<div class="a" style="left:1777px;top:572px;width:1px;height:21px;background:#cfcfcf"></div>
<div class="a" style="left:1875px;top:572px;width:1px;height:21px;background:#cfcfcf"></div>
<div class="a" style="left:26px;top:593px;width:1880px;height:21px;background:#f0f6fe"></div>
<div class="a" style="left:14px;top:593px;width:12px;height:21px;background:#f0f0f0;border-right:1px solid #8c8c8c;border-bottom:1px solid #8c8c8c"></div>
<div class="a" style="left:26px;top:613px;width:1880px;height:1px;background:#e0e3e8"></div>
<div class="a" style="left:74px;top:593px;width:1px;height:21px;background:#d6d7da"></div>
<div class="a" style="left:191px;top:593px;width:1px;height:21px;background:#d6d7da"></div>
<div class="a" style="left:270px;top:593px;width:1px;height:21px;background:#d6d7da"></div>
<div class="a" style="left:426px;top:593px;width:1px;height:21px;background:#d6d7da"></div>
<div class="a" style="left:603px;top:593px;width:1px;height:21px;background:#d6d7da"></div>
<div class="a" style="left:779px;top:593px;width:1px;height:21px;background:#d6d7da"></div>
<div class="a" style="left:818px;top:593px;width:1px;height:21px;background:#d6d7da"></div>
<div class="a" style="left:857px;top:593px;width:1px;height:21px;background:#d6d7da"></div>
<div class="a" style="left:896px;top:593px;width:1px;height:21px;background:#d6d7da"></div>
<div class="a" style="left:935px;top:593px;width:1px;height:21px;background:#d6d7da"></div>
<div class="a" style="left:1327px;top:593px;width:1px;height:21px;background:#d6d7da"></div>
<div class="a" style="left:1352px;top:593px;width:1px;height:21px;background:#d6d7da"></div>
<div class="a" style="left:1420px;top:593px;width:1px;height:21px;background:#d6d7da"></div>
<div class="a" style="left:1508px;top:593px;width:1px;height:21px;background:#d6d7da"></div>
<div class="a" style="left:1591px;top:593px;width:1px;height:21px;background:#d6d7da"></div>
<div class="a" style="left:1649px;top:593px;width:1px;height:21px;background:#d6d7da"></div>
<div class="a" style="left:1708px;top:593px;width:1px;height:21px;background:#d6d7da"></div>
<div class="a" style="left:1777px;top:593px;width:1px;height:21px;background:#d6d7da"></div>
<div class="a" style="left:1875px;top:593px;width:1px;height:21px;background:#d6d7da"></div>
<div class="a" style="left:1856px;top:593px;width:19px;height:20px;background:rgba(255,255,255,.45)"></div>
<div class="t" style="left:27px;top:593.4px;width:45.4px;height:20px;line-height:20px;overflow:hidden;font-size:12.25px;color:#0c0c12;text-align:right;padding-right:.4px;">11</div>
<div class="t" style="left:75px;top:593.4px;width:114.4px;height:20px;line-height:20px;overflow:hidden;font-size:12.25px;color:#0c0c12;padding-left:2px;">2024-03-14</div>
<div class="t" style="left:192px;top:593.4px;width:76.4px;height:20px;line-height:20px;overflow:hidden;font-size:12.25px;color:#0c0c12;padding-left:2px;">Thaw cycle</div>
<div class="t" style="left:271px;top:593.4px;width:153.4px;height:20px;line-height:20px;overflow:hidden;font-size:12.25px;color:#0c0c12;padding-left:2px;">Sharma, Amitabh</div>
<svg class="a" style="left:1330px;top:596px" width="19" height="15"><use href="#iCard"/></svg>
<svg class="a" style="left:1613px;top:596px" width="14" height="15"><use href="#iOk"/></svg>
<svg class="a" style="left:1672px;top:596px" width="14" height="15"><use href="#iOk"/></svg>
<svg class="a" style="left:1736px;top:596px" width="14" height="15"><use href="#iGr"/></svg>
<div class="a" style="left:1857px;top:596px;width:16px;height:15px;background:#fdfdfd;border:1px solid #dcdcdc;border-radius:4px"></div>
<svg class="a" style="left:1858px;top:596px" width="15" height="15"><use href="#iPen"/></svg>
<svg class="a" style="left:1884px;top:595px" width="12" height="16"><use href="#iLock"/></svg>
<div class="a" style="left:26px;top:614px;width:1880px;height:21px;background:#fbfcff"></div>
<div class="a" style="left:14px;top:614px;width:12px;height:21px;background:#f0f0f0;border-right:1px solid #8c8c8c;border-bottom:1px solid #8c8c8c"></div>
<div class="a" style="left:26px;top:634px;width:1880px;height:1px;background:#e0e3e8"></div>
<div class="a" style="left:74px;top:614px;width:1px;height:21px;background:#d6d7da"></div>
<div class="a" style="left:191px;top:614px;width:1px;height:21px;background:#d6d7da"></div>
<div class="a" style="left:270px;top:614px;width:1px;height:21px;background:#d6d7da"></div>
<div class="a" style="left:426px;top:614px;width:1px;height:21px;background:#d6d7da"></div>
<div class="a" style="left:603px;top:614px;width:1px;height:21px;background:#d6d7da"></div>
<div class="a" style="left:779px;top:614px;width:1px;height:21px;background:#d6d7da"></div>
<div class="a" style="left:818px;top:614px;width:1px;height:21px;background:#d6d7da"></div>
<div class="a" style="left:857px;top:614px;width:1px;height:21px;background:#d6d7da"></div>
<div class="a" style="left:896px;top:614px;width:1px;height:21px;background:#d6d7da"></div>
<div class="a" style="left:935px;top:614px;width:1px;height:21px;background:#d6d7da"></div>
<div class="a" style="left:1327px;top:614px;width:1px;height:21px;background:#d6d7da"></div>
<div class="a" style="left:1352px;top:614px;width:1px;height:21px;background:#d6d7da"></div>
<div class="a" style="left:1420px;top:614px;width:1px;height:21px;background:#d6d7da"></div>
<div class="a" style="left:1508px;top:614px;width:1px;height:21px;background:#d6d7da"></div>
<div class="a" style="left:1591px;top:614px;width:1px;height:21px;background:#d6d7da"></div>
<div class="a" style="left:1649px;top:614px;width:1px;height:21px;background:#d6d7da"></div>
<div class="a" style="left:1708px;top:614px;width:1px;height:21px;background:#d6d7da"></div>
<div class="a" style="left:1777px;top:614px;width:1px;height:21px;background:#d6d7da"></div>
<div class="a" style="left:1875px;top:614px;width:1px;height:21px;background:#d6d7da"></div>
<div class="a" style="left:1856px;top:614px;width:19px;height:20px;background:rgba(255,255,255,.45)"></div>
<div class="t" style="left:27px;top:614.4px;width:45.4px;height:20px;line-height:20px;overflow:hidden;font-size:12.25px;color:#0c0c12;text-align:right;padding-right:.4px;">10</div>
<div class="t" style="left:75px;top:614.4px;width:114.4px;height:20px;line-height:20px;overflow:hidden;font-size:12.25px;color:#0c0c12;padding-left:2px;">2024-03-11</div>
<div class="t" style="left:192px;top:614.4px;width:76.4px;height:20px;line-height:20px;overflow:hidden;font-size:12.25px;color:#0c0c12;padding-left:2px;">Thaw cycle</div>
<div class="t" style="left:271px;top:614.4px;width:153.4px;height:20px;line-height:20px;overflow:hidden;font-size:12.25px;color:#0c0c12;padding-left:2px;">Sharma, Amitabh</div>
<svg class="a" style="left:1330px;top:617px" width="19" height="15"><use href="#iCard"/></svg>
<svg class="a" style="left:1613px;top:617px" width="14" height="15"><use href="#iOk"/></svg>
<svg class="a" style="left:1672px;top:617px" width="14" height="15"><use href="#iOk"/></svg>
<svg class="a" style="left:1736px;top:617px" width="14" height="15"><use href="#iGr"/></svg>
<div class="a" style="left:1857px;top:617px;width:16px;height:15px;background:#fdfdfd;border:1px solid #dcdcdc;border-radius:4px"></div>
<svg class="a" style="left:1858px;top:617px" width="15" height="15"><use href="#iPen"/></svg>
<svg class="a" style="left:1884px;top:616px" width="12" height="16"><use href="#iLock"/></svg>
<div class="a" style="left:26px;top:635px;width:1880px;height:21px;background:#f0f6fe"></div>
<div class="a" style="left:14px;top:635px;width:12px;height:21px;background:#f0f0f0;border-right:1px solid #8c8c8c;border-bottom:1px solid #8c8c8c"></div>
<div class="a" style="left:26px;top:655px;width:1880px;height:1px;background:#e0e3e8"></div>
<div class="a" style="left:74px;top:635px;width:1px;height:21px;background:#d6d7da"></div>
<div class="a" style="left:191px;top:635px;width:1px;height:21px;background:#d6d7da"></div>
<div class="a" style="left:270px;top:635px;width:1px;height:21px;background:#d6d7da"></div>
<div class="a" style="left:426px;top:635px;width:1px;height:21px;background:#d6d7da"></div>
<div class="a" style="left:603px;top:635px;width:1px;height:21px;background:#d6d7da"></div>
<div class="a" style="left:779px;top:635px;width:1px;height:21px;background:#d6d7da"></div>
<div class="a" style="left:818px;top:635px;width:1px;height:21px;background:#d6d7da"></div>
<div class="a" style="left:857px;top:635px;width:1px;height:21px;background:#d6d7da"></div>
<div class="a" style="left:896px;top:635px;width:1px;height:21px;background:#d6d7da"></div>
<div class="a" style="left:935px;top:635px;width:1px;height:21px;background:#d6d7da"></div>
<div class="a" style="left:1327px;top:635px;width:1px;height:21px;background:#d6d7da"></div>
<div class="a" style="left:1352px;top:635px;width:1px;height:21px;background:#d6d7da"></div>
<div class="a" style="left:1420px;top:635px;width:1px;height:21px;background:#d6d7da"></div>
<div class="a" style="left:1508px;top:635px;width:1px;height:21px;background:#d6d7da"></div>
<div class="a" style="left:1591px;top:635px;width:1px;height:21px;background:#d6d7da"></div>
<div class="a" style="left:1649px;top:635px;width:1px;height:21px;background:#d6d7da"></div>
<div class="a" style="left:1708px;top:635px;width:1px;height:21px;background:#d6d7da"></div>
<div class="a" style="left:1777px;top:635px;width:1px;height:21px;background:#d6d7da"></div>
<div class="a" style="left:1875px;top:635px;width:1px;height:21px;background:#d6d7da"></div>
<div class="a" style="left:1856px;top:635px;width:19px;height:20px;background:rgba(255,255,255,.45)"></div>
<div class="t" style="left:27px;top:635.4px;width:45.4px;height:20px;line-height:20px;overflow:hidden;font-size:12.25px;color:#0c0c12;text-align:right;padding-right:.4px;">13</div>
<div class="t" style="left:75px;top:635.4px;width:114.4px;height:20px;line-height:20px;overflow:hidden;font-size:12.25px;color:#0c0c12;padding-left:2px;">2024-03-11</div>
<div class="t" style="left:192px;top:635.4px;width:76.4px;height:20px;line-height:20px;overflow:hidden;font-size:12.25px;color:#0c0c12;padding-left:2px;">Thaw cycle</div>
<div class="t" style="left:271px;top:635.4px;width:153.4px;height:20px;line-height:20px;overflow:hidden;font-size:12.25px;color:#0c0c12;padding-left:2px;">Sharma, Amitabh</div>
<div class="t" style="left:936px;top:635.4px;width:389.4px;height:20px;line-height:20px;overflow:hidden;font-size:12.25px;color:#0c0c12;padding-left:2px;">TA 2024-03-19: 1 PN 3 Emb</div>
<svg class="a" style="left:1330px;top:638px" width="19" height="15"><use href="#iCard"/></svg>
<svg class="a" style="left:1613px;top:638px" width="14" height="15"><use href="#iErr"/></svg>
<svg class="a" style="left:1672px;top:638px" width="14" height="15"><use href="#iOk"/></svg>
<svg class="a" style="left:1736px;top:638px" width="14" height="15"><use href="#iTh"/></svg>
<div class="a" style="left:1857px;top:638px;width:16px;height:15px;background:#fdfdfd;border:1px solid #dcdcdc;border-radius:4px"></div>
<svg class="a" style="left:1858px;top:638px" width="15" height="15"><use href="#iPen"/></svg>
<svg class="a" style="left:1884px;top:637px" width="12" height="16"><use href="#iLock"/></svg>
<div class="a" style="left:26px;top:656px;width:1880px;height:21px;background:#fbfcff"></div>
<div class="a" style="left:14px;top:656px;width:12px;height:21px;background:#f0f0f0;border-right:1px solid #8c8c8c;border-bottom:1px solid #8c8c8c"></div>
<div class="a" style="left:26px;top:676px;width:1880px;height:1px;background:#e0e3e8"></div>
<div class="a" style="left:74px;top:656px;width:1px;height:21px;background:#d6d7da"></div>
<div class="a" style="left:191px;top:656px;width:1px;height:21px;background:#d6d7da"></div>
<div class="a" style="left:270px;top:656px;width:1px;height:21px;background:#d6d7da"></div>
<div class="a" style="left:426px;top:656px;width:1px;height:21px;background:#d6d7da"></div>
<div class="a" style="left:603px;top:656px;width:1px;height:21px;background:#d6d7da"></div>
<div class="a" style="left:779px;top:656px;width:1px;height:21px;background:#d6d7da"></div>
<div class="a" style="left:818px;top:656px;width:1px;height:21px;background:#d6d7da"></div>
<div class="a" style="left:857px;top:656px;width:1px;height:21px;background:#d6d7da"></div>
<div class="a" style="left:896px;top:656px;width:1px;height:21px;background:#d6d7da"></div>
<div class="a" style="left:935px;top:656px;width:1px;height:21px;background:#d6d7da"></div>
<div class="a" style="left:1327px;top:656px;width:1px;height:21px;background:#d6d7da"></div>
<div class="a" style="left:1352px;top:656px;width:1px;height:21px;background:#d6d7da"></div>
<div class="a" style="left:1420px;top:656px;width:1px;height:21px;background:#d6d7da"></div>
<div class="a" style="left:1508px;top:656px;width:1px;height:21px;background:#d6d7da"></div>
<div class="a" style="left:1591px;top:656px;width:1px;height:21px;background:#d6d7da"></div>
<div class="a" style="left:1649px;top:656px;width:1px;height:21px;background:#d6d7da"></div>
<div class="a" style="left:1708px;top:656px;width:1px;height:21px;background:#d6d7da"></div>
<div class="a" style="left:1777px;top:656px;width:1px;height:21px;background:#d6d7da"></div>
<div class="a" style="left:1875px;top:656px;width:1px;height:21px;background:#d6d7da"></div>
<div class="a" style="left:1856px;top:656px;width:19px;height:20px;background:rgba(255,255,255,.45)"></div>
<div class="t" style="left:27px;top:656.4px;width:45.4px;height:20px;line-height:20px;overflow:hidden;font-size:12.25px;color:#0c0c12;text-align:right;padding-right:.4px;">12</div>
<div class="t" style="left:75px;top:656.4px;width:114.4px;height:20px;line-height:20px;overflow:hidden;font-size:12.25px;color:#0c0c12;padding-left:2px;">2024-03-03</div>
<div class="t" style="left:192px;top:656.4px;width:76.4px;height:20px;line-height:20px;overflow:hidden;font-size:12.25px;color:#0c0c12;padding-left:2px;">IVF,ICSI</div>
<div class="t" style="left:271px;top:656.4px;width:153.4px;height:20px;line-height:20px;overflow:hidden;font-size:12.25px;color:#0c0c12;padding-left:2px;">Sharma, Amitabh</div>
<div class="t" style="left:427px;top:656.4px;width:174.4px;height:20px;line-height:20px;overflow:hidden;font-size:12.25px;color:#0c0c12;padding-left:2px;">antegrade ejaculation</div>
<div class="t" style="left:604px;top:656.4px;width:173.4px;height:20px;line-height:20px;overflow:hidden;font-size:12.25px;color:#0c0c12;padding-left:2px;">2024-03-07 | 1d</div>
<div class="t" style="left:780px;top:656.4px;width:36.4px;height:20px;line-height:20px;overflow:hidden;font-size:12.25px;color:#0c0c12;padding-left:2px;">multip</div>
<div class="t" style="left:819px;top:656.4px;width:36.4px;height:20px;line-height:20px;overflow:hidden;font-size:12.25px;color:#0c0c12;padding-left:2px;">Bemfola</div>
<div class="t" style="left:858px;top:656.4px;width:36.4px;height:20px;line-height:20px;overflow:hidden;font-size:12.25px;color:#0c0c12;padding-left:2px;">2024-03</div>
<div class="t" style="left:897px;top:656.4px;width:36.4px;height:20px;line-height:20px;overflow:hidden;font-size:12.25px;color:#0c0c12;padding-left:2px;">Brevact</div>
<div class="t" style="left:936px;top:656.4px;width:389.4px;height:20px;line-height:20px;overflow:hidden;font-size:12.25px;color:#0c0c12;padding-left:2px;">FA 2024-03-16: 8 Ooc</div>
<svg class="a" style="left:1330px;top:659px" width="19" height="15"><use href="#iCard"/></svg>
<svg class="a" style="left:1613px;top:659px" width="14" height="15"><use href="#iErr"/></svg>
<svg class="a" style="left:1672px;top:659px" width="14" height="15"><use href="#iOk"/></svg>
<svg class="a" style="left:1736px;top:659px" width="14" height="15"><use href="#iTh"/></svg>
<div class="a" style="left:1857px;top:659px;width:16px;height:15px;background:#fdfdfd;border:1px solid #dcdcdc;border-radius:4px"></div>
<svg class="a" style="left:1858px;top:659px" width="15" height="15"><use href="#iPen"/></svg>
<svg class="a" style="left:1884px;top:658px" width="12" height="16"><use href="#iLock"/></svg>
<div class="a" style="left:26px;top:677px;width:1880px;height:21px;background:#f0f6fe"></div>
<div class="a" style="left:14px;top:677px;width:12px;height:21px;background:#f0f0f0;border-right:1px solid #8c8c8c;border-bottom:1px solid #8c8c8c"></div>
<div class="a" style="left:26px;top:697px;width:1880px;height:1px;background:#e0e3e8"></div>
<div class="a" style="left:74px;top:677px;width:1px;height:21px;background:#d6d7da"></div>
<div class="a" style="left:191px;top:677px;width:1px;height:21px;background:#d6d7da"></div>
<div class="a" style="left:270px;top:677px;width:1px;height:21px;background:#d6d7da"></div>
<div class="a" style="left:426px;top:677px;width:1px;height:21px;background:#d6d7da"></div>
<div class="a" style="left:603px;top:677px;width:1px;height:21px;background:#d6d7da"></div>
<div class="a" style="left:779px;top:677px;width:1px;height:21px;background:#d6d7da"></div>
<div class="a" style="left:818px;top:677px;width:1px;height:21px;background:#d6d7da"></div>
<div class="a" style="left:857px;top:677px;width:1px;height:21px;background:#d6d7da"></div>
<div class="a" style="left:896px;top:677px;width:1px;height:21px;background:#d6d7da"></div>
<div class="a" style="left:935px;top:677px;width:1px;height:21px;background:#d6d7da"></div>
<div class="a" style="left:1327px;top:677px;width:1px;height:21px;background:#d6d7da"></div>
<div class="a" style="left:1352px;top:677px;width:1px;height:21px;background:#d6d7da"></div>
<div class="a" style="left:1420px;top:677px;width:1px;height:21px;background:#d6d7da"></div>
<div class="a" style="left:1508px;top:677px;width:1px;height:21px;background:#d6d7da"></div>
<div class="a" style="left:1591px;top:677px;width:1px;height:21px;background:#d6d7da"></div>
<div class="a" style="left:1649px;top:677px;width:1px;height:21px;background:#d6d7da"></div>
<div class="a" style="left:1708px;top:677px;width:1px;height:21px;background:#d6d7da"></div>
<div class="a" style="left:1777px;top:677px;width:1px;height:21px;background:#d6d7da"></div>
<div class="a" style="left:1875px;top:677px;width:1px;height:21px;background:#d6d7da"></div>
<div class="a" style="left:1856px;top:677px;width:19px;height:20px;background:rgba(255,255,255,.45)"></div>
<div class="t" style="left:27px;top:677.4px;width:45.4px;height:20px;line-height:20px;overflow:hidden;font-size:12.25px;color:#0c0c12;text-align:right;padding-right:.4px;">8</div>
<div class="t" style="left:75px;top:677.4px;width:114.4px;height:20px;line-height:20px;overflow:hidden;font-size:12.25px;color:#0c0c12;padding-left:2px;">2023-12-19</div>
<div class="t" style="left:192px;top:677.4px;width:76.4px;height:20px;line-height:20px;overflow:hidden;font-size:12.25px;color:#0c0c12;padding-left:2px;">IUI - partner</div>
<div class="t" style="left:271px;top:677.4px;width:153.4px;height:20px;line-height:20px;overflow:hidden;font-size:12.25px;color:#0c0c12;padding-left:2px;">Sharma, Amitabh</div>
<div class="t" style="left:936px;top:677.4px;width:389.4px;height:20px;line-height:20px;overflow:hidden;font-size:12.25px;color:#0c0c12;padding-left:2px;">IUI - partner 2023-12-19</div>
<svg class="a" style="left:1330px;top:680px" width="19" height="15"><use href="#iCard"/></svg>
<svg class="a" style="left:1613px;top:680px" width="14" height="15"><use href="#iOk"/></svg>
<svg class="a" style="left:1672px;top:680px" width="14" height="15"><use href="#iOk"/></svg>
<svg class="a" style="left:1736px;top:680px" width="14" height="15"><use href="#iGr"/></svg>
<div class="a" style="left:1857px;top:680px;width:16px;height:15px;background:#fdfdfd;border:1px solid #dcdcdc;border-radius:4px"></div>
<svg class="a" style="left:1858px;top:680px" width="15" height="15"><use href="#iPen"/></svg>
<svg class="a" style="left:1884px;top:679px" width="12" height="16"><use href="#iLock"/></svg>
<div class="a" style="left:26px;top:698px;width:1880px;height:21px;background:#fbfcff"></div>
<div class="a" style="left:14px;top:698px;width:12px;height:21px;background:#f0f0f0;border-right:1px solid #8c8c8c;border-bottom:1px solid #8c8c8c"></div>
<div class="a" style="left:26px;top:718px;width:1880px;height:1px;background:#e0e3e8"></div>
<div class="a" style="left:74px;top:698px;width:1px;height:21px;background:#d6d7da"></div>
<div class="a" style="left:191px;top:698px;width:1px;height:21px;background:#d6d7da"></div>
<div class="a" style="left:270px;top:698px;width:1px;height:21px;background:#d6d7da"></div>
<div class="a" style="left:426px;top:698px;width:1px;height:21px;background:#d6d7da"></div>
<div class="a" style="left:603px;top:698px;width:1px;height:21px;background:#d6d7da"></div>
<div class="a" style="left:779px;top:698px;width:1px;height:21px;background:#d6d7da"></div>
<div class="a" style="left:818px;top:698px;width:1px;height:21px;background:#d6d7da"></div>
<div class="a" style="left:857px;top:698px;width:1px;height:21px;background:#d6d7da"></div>
<div class="a" style="left:896px;top:698px;width:1px;height:21px;background:#d6d7da"></div>
<div class="a" style="left:935px;top:698px;width:1px;height:21px;background:#d6d7da"></div>
<div class="a" style="left:1327px;top:698px;width:1px;height:21px;background:#d6d7da"></div>
<div class="a" style="left:1352px;top:698px;width:1px;height:21px;background:#d6d7da"></div>
<div class="a" style="left:1420px;top:698px;width:1px;height:21px;background:#d6d7da"></div>
<div class="a" style="left:1508px;top:698px;width:1px;height:21px;background:#d6d7da"></div>
<div class="a" style="left:1591px;top:698px;width:1px;height:21px;background:#d6d7da"></div>
<div class="a" style="left:1649px;top:698px;width:1px;height:21px;background:#d6d7da"></div>
<div class="a" style="left:1708px;top:698px;width:1px;height:21px;background:#d6d7da"></div>
<div class="a" style="left:1777px;top:698px;width:1px;height:21px;background:#d6d7da"></div>
<div class="a" style="left:1875px;top:698px;width:1px;height:21px;background:#d6d7da"></div>
<div class="a" style="left:1856px;top:698px;width:19px;height:20px;background:rgba(255,255,255,.45)"></div>
<div class="t" style="left:27px;top:698.4px;width:45.4px;height:20px;line-height:20px;overflow:hidden;font-size:12.25px;color:#0c0c12;text-align:right;padding-right:.4px;">7</div>
<div class="t" style="left:75px;top:698.4px;width:114.4px;height:20px;line-height:20px;overflow:hidden;font-size:12.25px;color:#0c0c12;padding-left:2px;">2023-12-06</div>
<div class="t" style="left:192px;top:698.4px;width:76.4px;height:20px;line-height:20px;overflow:hidden;font-size:12.25px;color:#0c0c12;padding-left:2px;">IUI - partner</div>
<div class="t" style="left:271px;top:698.4px;width:153.4px;height:20px;line-height:20px;overflow:hidden;font-size:12.25px;color:#0c0c12;padding-left:2px;">Sharma, Amitabh</div>
<div class="t" style="left:936px;top:698.4px;width:389.4px;height:20px;line-height:20px;overflow:hidden;font-size:12.25px;color:#0c0c12;padding-left:2px;">IUI - partner 2023-12-06</div>
<div class="t" style="left:1421px;top:698.4px;width:85.4px;height:20px;line-height:20px;overflow:hidden;font-size:12.25px;color:#0c0c12;padding-left:2px;">Yes</div>
<svg class="a" style="left:1330px;top:701px" width="19" height="15"><use href="#iCard"/></svg>
<svg class="a" style="left:1613px;top:701px" width="14" height="15"><use href="#iErr"/></svg>
<svg class="a" style="left:1672px;top:701px" width="14" height="15"><use href="#iOk"/></svg>
<svg class="a" style="left:1736px;top:701px" width="14" height="15"><use href="#iGr"/></svg>
<div class="a" style="left:1857px;top:701px;width:16px;height:15px;background:#fdfdfd;border:1px solid #dcdcdc;border-radius:4px"></div>
<svg class="a" style="left:1858px;top:701px" width="15" height="15"><use href="#iPen"/></svg>
<svg class="a" style="left:1884px;top:700px" width="12" height="16"><use href="#iLock"/></svg>
<div class="a" style="left:26px;top:719px;width:1880px;height:21px;background:#f0f6fe"></div>
<div class="a" style="left:14px;top:719px;width:12px;height:21px;background:#f0f0f0;border-right:1px solid #8c8c8c;border-bottom:1px solid #8c8c8c"></div>
<div class="a" style="left:26px;top:739px;width:1880px;height:1px;background:#e0e3e8"></div>
<div class="a" style="left:74px;top:719px;width:1px;height:21px;background:#d6d7da"></div>
<div class="a" style="left:191px;top:719px;width:1px;height:21px;background:#d6d7da"></div>
<div class="a" style="left:270px;top:719px;width:1px;height:21px;background:#d6d7da"></div>
<div class="a" style="left:426px;top:719px;width:1px;height:21px;background:#d6d7da"></div>
<div class="a" style="left:603px;top:719px;width:1px;height:21px;background:#d6d7da"></div>
<div class="a" style="left:779px;top:719px;width:1px;height:21px;background:#d6d7da"></div>
<div class="a" style="left:818px;top:719px;width:1px;height:21px;background:#d6d7da"></div>
<div class="a" style="left:857px;top:719px;width:1px;height:21px;background:#d6d7da"></div>
<div class="a" style="left:896px;top:719px;width:1px;height:21px;background:#d6d7da"></div>
<div class="a" style="left:935px;top:719px;width:1px;height:21px;background:#d6d7da"></div>
<div class="a" style="left:1327px;top:719px;width:1px;height:21px;background:#d6d7da"></div>
<div class="a" style="left:1352px;top:719px;width:1px;height:21px;background:#d6d7da"></div>
<div class="a" style="left:1420px;top:719px;width:1px;height:21px;background:#d6d7da"></div>
<div class="a" style="left:1508px;top:719px;width:1px;height:21px;background:#d6d7da"></div>
<div class="a" style="left:1591px;top:719px;width:1px;height:21px;background:#d6d7da"></div>
<div class="a" style="left:1649px;top:719px;width:1px;height:21px;background:#d6d7da"></div>
<div class="a" style="left:1708px;top:719px;width:1px;height:21px;background:#d6d7da"></div>
<div class="a" style="left:1777px;top:719px;width:1px;height:21px;background:#d6d7da"></div>
<div class="a" style="left:1875px;top:719px;width:1px;height:21px;background:#d6d7da"></div>
<div class="a" style="left:1856px;top:719px;width:19px;height:20px;background:rgba(255,255,255,.45)"></div>
<div class="t" style="left:27px;top:719.4px;width:45.4px;height:20px;line-height:20px;overflow:hidden;font-size:12.25px;color:#0c0c12;text-align:right;padding-right:.4px;">5</div>
<div class="t" style="left:75px;top:719.4px;width:114.4px;height:20px;line-height:20px;overflow:hidden;font-size:12.25px;color:#0c0c12;padding-left:2px;">2023-11-14</div>
<div class="t" style="left:192px;top:719.4px;width:76.4px;height:20px;line-height:20px;overflow:hidden;font-size:12.25px;color:#0c0c12;padding-left:2px;">IVF,ICSI</div>
<div class="t" style="left:271px;top:719.4px;width:153.4px;height:20px;line-height:20px;overflow:hidden;font-size:12.25px;color:#0c0c12;padding-left:2px;">Sharma, Amitabh</div>
<div class="t" style="left:780px;top:719.4px;width:36.4px;height:20px;line-height:20px;overflow:hidden;font-size:12.25px;color:#0c0c12;padding-left:2px;">multip</div>
<div class="t" style="left:936px;top:719.4px;width:389.4px;height:20px;line-height:20px;overflow:hidden;font-size:12.25px;color:#0c0c12;padding-left:2px;">FA 2023-12-06: 5 Ooc</div>
<div class="t" style="left:1353px;top:719.4px;width:65.4px;height:20px;line-height:20px;overflow:hidden;font-size:12.25px;color:#0c0c12;padding-left:2px;">4 PN</div>
<svg class="a" style="left:1330px;top:722px" width="19" height="15"><use href="#iCard"/></svg>
<svg class="a" style="left:1613px;top:722px" width="14" height="15"><use href="#iErr"/></svg>
<svg class="a" style="left:1672px;top:722px" width="14" height="15"><use href="#iOk"/></svg>
<svg class="a" style="left:1736px;top:722px" width="14" height="15"><use href="#iTh"/></svg>
<div class="a" style="left:1857px;top:722px;width:16px;height:15px;background:#fdfdfd;border:1px solid #dcdcdc;border-radius:4px"></div>
<svg class="a" style="left:1858px;top:722px" width="15" height="15"><use href="#iPen"/></svg>
<svg class="a" style="left:1884px;top:721px" width="12" height="16"><use href="#iLock"/></svg>
<div class="a" style="left:26px;top:740px;width:1880px;height:21px;background:#fbfcff"></div>
<div class="a" style="left:14px;top:740px;width:12px;height:21px;background:#f0f0f0;border-right:1px solid #8c8c8c;border-bottom:1px solid #8c8c8c"></div>
<div class="a" style="left:26px;top:760px;width:1880px;height:1px;background:#e0e3e8"></div>
<div class="a" style="left:74px;top:740px;width:1px;height:21px;background:#d6d7da"></div>
<div class="a" style="left:191px;top:740px;width:1px;height:21px;background:#d6d7da"></div>
<div class="a" style="left:270px;top:740px;width:1px;height:21px;background:#d6d7da"></div>
<div class="a" style="left:426px;top:740px;width:1px;height:21px;background:#d6d7da"></div>
<div class="a" style="left:603px;top:740px;width:1px;height:21px;background:#d6d7da"></div>
<div class="a" style="left:779px;top:740px;width:1px;height:21px;background:#d6d7da"></div>
<div class="a" style="left:818px;top:740px;width:1px;height:21px;background:#d6d7da"></div>
<div class="a" style="left:857px;top:740px;width:1px;height:21px;background:#d6d7da"></div>
<div class="a" style="left:896px;top:740px;width:1px;height:21px;background:#d6d7da"></div>
<div class="a" style="left:935px;top:740px;width:1px;height:21px;background:#d6d7da"></div>
<div class="a" style="left:1327px;top:740px;width:1px;height:21px;background:#d6d7da"></div>
<div class="a" style="left:1352px;top:740px;width:1px;height:21px;background:#d6d7da"></div>
<div class="a" style="left:1420px;top:740px;width:1px;height:21px;background:#d6d7da"></div>
<div class="a" style="left:1508px;top:740px;width:1px;height:21px;background:#d6d7da"></div>
<div class="a" style="left:1591px;top:740px;width:1px;height:21px;background:#d6d7da"></div>
<div class="a" style="left:1649px;top:740px;width:1px;height:21px;background:#d6d7da"></div>
<div class="a" style="left:1708px;top:740px;width:1px;height:21px;background:#d6d7da"></div>
<div class="a" style="left:1777px;top:740px;width:1px;height:21px;background:#d6d7da"></div>
<div class="a" style="left:1875px;top:740px;width:1px;height:21px;background:#d6d7da"></div>
<div class="a" style="left:1856px;top:740px;width:19px;height:20px;background:rgba(255,255,255,.45)"></div>
<div class="t" style="left:27px;top:740.4px;width:45.4px;height:20px;line-height:20px;overflow:hidden;font-size:12.25px;color:#0c0c12;text-align:right;padding-right:.4px;">4</div>
<div class="t" style="left:75px;top:740.4px;width:114.4px;height:20px;line-height:20px;overflow:hidden;font-size:12.25px;color:#0c0c12;padding-left:2px;">2023-10-14</div>
<div class="t" style="left:192px;top:740.4px;width:76.4px;height:20px;line-height:20px;overflow:hidden;font-size:12.25px;color:#0c0c12;padding-left:2px;">IUI - donor</div>
<div class="t" style="left:271px;top:740.4px;width:153.4px;height:20px;line-height:20px;overflow:hidden;font-size:12.25px;color:#0c0c12;padding-left:2px;">Sharma, Amitabh</div>
<svg class="a" style="left:1330px;top:743px" width="19" height="15"><use href="#iCard"/></svg>
<svg class="a" style="left:1613px;top:743px" width="14" height="15"><use href="#iOk"/></svg>
<svg class="a" style="left:1672px;top:743px" width="14" height="15"><use href="#iOk"/></svg>
<svg class="a" style="left:1736px;top:743px" width="14" height="15"><use href="#iGr"/></svg>
<div class="a" style="left:1857px;top:743px;width:16px;height:15px;background:#fdfdfd;border:1px solid #dcdcdc;border-radius:4px"></div>
<svg class="a" style="left:1858px;top:743px" width="15" height="15"><use href="#iPen"/></svg>
<svg class="a" style="left:1884px;top:742px" width="12" height="16"><use href="#iLock"/></svg>
<div class="a" style="left:26px;top:761px;width:1880px;height:21px;background:#f0f6fe"></div>
<div class="a" style="left:14px;top:761px;width:12px;height:21px;background:#f0f0f0;border-right:1px solid #8c8c8c;border-bottom:1px solid #8c8c8c"></div>
<div class="a" style="left:26px;top:781px;width:1880px;height:1px;background:#e0e3e8"></div>
<div class="a" style="left:74px;top:761px;width:1px;height:21px;background:#d6d7da"></div>
<div class="a" style="left:191px;top:761px;width:1px;height:21px;background:#d6d7da"></div>
<div class="a" style="left:270px;top:761px;width:1px;height:21px;background:#d6d7da"></div>
<div class="a" style="left:426px;top:761px;width:1px;height:21px;background:#d6d7da"></div>
<div class="a" style="left:603px;top:761px;width:1px;height:21px;background:#d6d7da"></div>
<div class="a" style="left:779px;top:761px;width:1px;height:21px;background:#d6d7da"></div>
<div class="a" style="left:818px;top:761px;width:1px;height:21px;background:#d6d7da"></div>
<div class="a" style="left:857px;top:761px;width:1px;height:21px;background:#d6d7da"></div>
<div class="a" style="left:896px;top:761px;width:1px;height:21px;background:#d6d7da"></div>
<div class="a" style="left:935px;top:761px;width:1px;height:21px;background:#d6d7da"></div>
<div class="a" style="left:1327px;top:761px;width:1px;height:21px;background:#d6d7da"></div>
<div class="a" style="left:1352px;top:761px;width:1px;height:21px;background:#d6d7da"></div>
<div class="a" style="left:1420px;top:761px;width:1px;height:21px;background:#d6d7da"></div>
<div class="a" style="left:1508px;top:761px;width:1px;height:21px;background:#d6d7da"></div>
<div class="a" style="left:1591px;top:761px;width:1px;height:21px;background:#d6d7da"></div>
<div class="a" style="left:1649px;top:761px;width:1px;height:21px;background:#d6d7da"></div>
<div class="a" style="left:1708px;top:761px;width:1px;height:21px;background:#d6d7da"></div>
<div class="a" style="left:1777px;top:761px;width:1px;height:21px;background:#d6d7da"></div>
<div class="a" style="left:1875px;top:761px;width:1px;height:21px;background:#d6d7da"></div>
<div class="a" style="left:1856px;top:761px;width:19px;height:20px;background:rgba(255,255,255,.45)"></div>
<div class="t" style="left:27px;top:761.4px;width:45.4px;height:20px;line-height:20px;overflow:hidden;font-size:12.25px;color:#0c0c12;text-align:right;padding-right:.4px;">3</div>
<div class="t" style="left:75px;top:761.4px;width:114.4px;height:20px;line-height:20px;overflow:hidden;font-size:12.25px;color:#0c0c12;padding-left:2px;">2023-10-04</div>
<div class="t" style="left:192px;top:761.4px;width:76.4px;height:20px;line-height:20px;overflow:hidden;font-size:12.25px;color:#0c0c12;padding-left:2px;">Only aspiration</div>
<div class="t" style="left:271px;top:761.4px;width:153.4px;height:20px;line-height:20px;overflow:hidden;font-size:12.25px;color:#0c0c12;padding-left:2px;">Sharma, Amitabh</div>
<div class="t" style="left:936px;top:761.4px;width:389.4px;height:20px;line-height:20px;overflow:hidden;font-size:12.25px;color:#0c0c12;padding-left:2px;">FA 2023-10-16: 8 Ooc</div>
<div class="t" style="left:1353px;top:761.4px;width:65.4px;height:20px;line-height:20px;overflow:hidden;font-size:12.25px;color:#0c0c12;padding-left:2px;">1 OOC</div>
<div class="t" style="left:1421px;top:761.4px;width:85.4px;height:20px;line-height:20px;overflow:hidden;font-size:12.25px;color:#0c0c12;padding-left:2px;">None</div>
<svg class="a" style="left:1330px;top:764px" width="19" height="15"><use href="#iCard"/></svg>
<svg class="a" style="left:1613px;top:764px" width="14" height="15"><use href="#iErr"/></svg>
<svg class="a" style="left:1672px;top:764px" width="14" height="15"><use href="#iOk"/></svg>
<svg class="a" style="left:1736px;top:764px" width="14" height="15"><use href="#iGr"/></svg>
<div class="a" style="left:1857px;top:764px;width:16px;height:15px;background:#fdfdfd;border:1px solid #dcdcdc;border-radius:4px"></div>
<svg class="a" style="left:1858px;top:764px" width="15" height="15"><use href="#iPen"/></svg>
<svg class="a" style="left:1884px;top:763px" width="12" height="16"><use href="#iLock"/></svg>
<div class="a" style="left:26px;top:782px;width:1880px;height:21px;background:#fbfcff"></div>
<div class="a" style="left:14px;top:782px;width:12px;height:21px;background:#f0f0f0;border-right:1px solid #8c8c8c;border-bottom:1px solid #8c8c8c"></div>
<div class="a" style="left:26px;top:802px;width:1880px;height:1px;background:#e0e3e8"></div>
<div class="a" style="left:74px;top:782px;width:1px;height:21px;background:#d6d7da"></div>
<div class="a" style="left:191px;top:782px;width:1px;height:21px;background:#d6d7da"></div>
<div class="a" style="left:270px;top:782px;width:1px;height:21px;background:#d6d7da"></div>
<div class="a" style="left:426px;top:782px;width:1px;height:21px;background:#d6d7da"></div>
<div class="a" style="left:603px;top:782px;width:1px;height:21px;background:#d6d7da"></div>
<div class="a" style="left:779px;top:782px;width:1px;height:21px;background:#d6d7da"></div>
<div class="a" style="left:818px;top:782px;width:1px;height:21px;background:#d6d7da"></div>
<div class="a" style="left:857px;top:782px;width:1px;height:21px;background:#d6d7da"></div>
<div class="a" style="left:896px;top:782px;width:1px;height:21px;background:#d6d7da"></div>
<div class="a" style="left:935px;top:782px;width:1px;height:21px;background:#d6d7da"></div>
<div class="a" style="left:1327px;top:782px;width:1px;height:21px;background:#d6d7da"></div>
<div class="a" style="left:1352px;top:782px;width:1px;height:21px;background:#d6d7da"></div>
<div class="a" style="left:1420px;top:782px;width:1px;height:21px;background:#d6d7da"></div>
<div class="a" style="left:1508px;top:782px;width:1px;height:21px;background:#d6d7da"></div>
<div class="a" style="left:1591px;top:782px;width:1px;height:21px;background:#d6d7da"></div>
<div class="a" style="left:1649px;top:782px;width:1px;height:21px;background:#d6d7da"></div>
<div class="a" style="left:1708px;top:782px;width:1px;height:21px;background:#d6d7da"></div>
<div class="a" style="left:1777px;top:782px;width:1px;height:21px;background:#d6d7da"></div>
<div class="a" style="left:1875px;top:782px;width:1px;height:21px;background:#d6d7da"></div>
<div class="a" style="left:1856px;top:782px;width:19px;height:20px;background:rgba(255,255,255,.45)"></div>
<div class="t" style="left:27px;top:782.4px;width:45.4px;height:20px;line-height:20px;overflow:hidden;font-size:12.25px;color:#0c0c12;text-align:right;padding-right:.4px;">2</div>
<div class="t" style="left:75px;top:782.4px;width:114.4px;height:20px;line-height:20px;overflow:hidden;font-size:12.25px;color:#0c0c12;padding-left:2px;">2023-08-17</div>
<div class="t" style="left:192px;top:782.4px;width:76.4px;height:20px;line-height:20px;overflow:hidden;font-size:12.25px;color:#0c0c12;padding-left:2px;">Thaw cycle</div>
<div class="t" style="left:271px;top:782.4px;width:153.4px;height:20px;line-height:20px;overflow:hidden;font-size:12.25px;color:#0c0c12;padding-left:2px;">Sharma, Amitabh</div>
<svg class="a" style="left:1330px;top:785px" width="19" height="15"><use href="#iCard"/></svg>
<svg class="a" style="left:1613px;top:785px" width="14" height="15"><use href="#iErr"/></svg>
<svg class="a" style="left:1672px;top:785px" width="14" height="15"><use href="#iOk"/></svg>
<svg class="a" style="left:1736px;top:785px" width="14" height="15"><use href="#iGr"/></svg>
<div class="a" style="left:1857px;top:785px;width:16px;height:15px;background:#fdfdfd;border:1px solid #dcdcdc;border-radius:4px"></div>
<svg class="a" style="left:1858px;top:785px" width="15" height="15"><use href="#iPen"/></svg>
<svg class="a" style="left:1884px;top:784px" width="12" height="16"><use href="#iLock"/></svg>
<div class="a" style="left:26px;top:803px;width:1880px;height:21px;background:#f0f6fe"></div>
<div class="a" style="left:14px;top:803px;width:12px;height:21px;background:#f0f0f0;border-right:1px solid #8c8c8c;border-bottom:1px solid #8c8c8c"></div>
<div class="a" style="left:26px;top:823px;width:1880px;height:1px;background:#e0e3e8"></div>
<div class="a" style="left:74px;top:803px;width:1px;height:21px;background:#d6d7da"></div>
<div class="a" style="left:191px;top:803px;width:1px;height:21px;background:#d6d7da"></div>
<div class="a" style="left:270px;top:803px;width:1px;height:21px;background:#d6d7da"></div>
<div class="a" style="left:426px;top:803px;width:1px;height:21px;background:#d6d7da"></div>
<div class="a" style="left:603px;top:803px;width:1px;height:21px;background:#d6d7da"></div>
<div class="a" style="left:779px;top:803px;width:1px;height:21px;background:#d6d7da"></div>
<div class="a" style="left:818px;top:803px;width:1px;height:21px;background:#d6d7da"></div>
<div class="a" style="left:857px;top:803px;width:1px;height:21px;background:#d6d7da"></div>
<div class="a" style="left:896px;top:803px;width:1px;height:21px;background:#d6d7da"></div>
<div class="a" style="left:935px;top:803px;width:1px;height:21px;background:#d6d7da"></div>
<div class="a" style="left:1327px;top:803px;width:1px;height:21px;background:#d6d7da"></div>
<div class="a" style="left:1352px;top:803px;width:1px;height:21px;background:#d6d7da"></div>
<div class="a" style="left:1420px;top:803px;width:1px;height:21px;background:#d6d7da"></div>
<div class="a" style="left:1508px;top:803px;width:1px;height:21px;background:#d6d7da"></div>
<div class="a" style="left:1591px;top:803px;width:1px;height:21px;background:#d6d7da"></div>
<div class="a" style="left:1649px;top:803px;width:1px;height:21px;background:#d6d7da"></div>
<div class="a" style="left:1708px;top:803px;width:1px;height:21px;background:#d6d7da"></div>
<div class="a" style="left:1777px;top:803px;width:1px;height:21px;background:#d6d7da"></div>
<div class="a" style="left:1875px;top:803px;width:1px;height:21px;background:#d6d7da"></div>
<div class="a" style="left:1856px;top:803px;width:19px;height:20px;background:rgba(255,255,255,.45)"></div>
<div class="t" style="left:27px;top:803.4px;width:45.4px;height:20px;line-height:20px;overflow:hidden;font-size:12.25px;color:#0c0c12;text-align:right;padding-right:.4px;">1</div>
<div class="t" style="left:75px;top:803.4px;width:114.4px;height:20px;line-height:20px;overflow:hidden;font-size:12.25px;color:#0c0c12;padding-left:2px;">2023-06-20</div>
<div class="t" style="left:192px;top:803.4px;width:76.4px;height:20px;line-height:20px;overflow:hidden;font-size:12.25px;color:#0c0c12;padding-left:2px;">IVF,ICSI</div>
<div class="t" style="left:271px;top:803.4px;width:153.4px;height:20px;line-height:20px;overflow:hidden;font-size:12.25px;color:#0c0c12;padding-left:2px;">Sharma, Amitabh</div>
<div class="t" style="left:604px;top:803.4px;width:173.4px;height:20px;line-height:20px;overflow:hidden;font-size:12.25px;color:#0c0c12;padding-left:2px;">2023-06-22 | 243d</div>
<div class="t" style="left:780px;top:803.4px;width:36.4px;height:20px;line-height:20px;overflow:hidden;font-size:12.25px;color:#0c0c12;padding-left:2px;">ultralo</div>
<div class="t" style="left:819px;top:803.4px;width:36.4px;height:20px;line-height:20px;overflow:hidden;font-size:12.25px;color:#0c0c12;padding-left:2px;">Bemfola</div>
<div class="t" style="left:858px;top:803.4px;width:36.4px;height:20px;line-height:20px;overflow:hidden;font-size:12.25px;color:#0c0c12;padding-left:2px;">2023-06</div>
<div class="t" style="left:897px;top:803.4px;width:36.4px;height:20px;line-height:20px;overflow:hidden;font-size:12.25px;color:#0c0c12;padding-left:2px;">Brevact</div>
<div class="t" style="left:936px;top:803.4px;width:389.4px;height:20px;line-height:20px;overflow:hidden;font-size:12.25px;color:#0c0c12;padding-left:2px;">FA 2023-06-20: 13 Ooc&nbsp;&nbsp;&nbsp;&nbsp; ET 2023-06-25: 1 Emb</div>
<div class="t" style="left:1353px;top:803.4px;width:65.4px;height:20px;line-height:20px;overflow:hidden;font-size:12.25px;color:#0c0c12;padding-left:2px;">5 EMB</div>
<div class="t" style="left:1421px;top:803.4px;width:85.4px;height:20px;line-height:20px;overflow:hidden;font-size:12.25px;color:#0c0c12;padding-left:2px;">Yes</div>
<svg class="a" style="left:1330px;top:806px" width="19" height="15"><use href="#iCard"/></svg>
<svg class="a" style="left:1613px;top:806px" width="14" height="15"><use href="#iErr"/></svg>
<svg class="a" style="left:1672px;top:806px" width="14" height="15"><use href="#iGr"/></svg>
<svg class="a" style="left:1736px;top:806px" width="14" height="15"><use href="#iTh"/></svg>
<div class="a" style="left:1857px;top:806px;width:16px;height:15px;background:#fdfdfd;border:1px solid #dcdcdc;border-radius:4px"></div>
<svg class="a" style="left:1858px;top:806px" width="15" height="15"><use href="#iPen"/></svg>
<svg class="a" style="left:1884px;top:805px" width="12" height="16"><use href="#iLock"/></svg>
<div class="a" style="left:26px;top:824px;width:1880px;height:21px;background:#fbfcff"></div>
<div class="a" style="left:14px;top:824px;width:12px;height:21px;background:#f0f0f0;border-right:1px solid #8c8c8c;border-bottom:1px solid #8c8c8c"></div>
<div class="a" style="left:26px;top:844px;width:1880px;height:1px;background:#e0e3e8"></div>
<div class="a" style="left:74px;top:824px;width:1px;height:21px;background:#d6d7da"></div>
<div class="a" style="left:191px;top:824px;width:1px;height:21px;background:#d6d7da"></div>
<div class="a" style="left:270px;top:824px;width:1px;height:21px;background:#d6d7da"></div>
<div class="a" style="left:426px;top:824px;width:1px;height:21px;background:#d6d7da"></div>
<div class="a" style="left:603px;top:824px;width:1px;height:21px;background:#d6d7da"></div>
<div class="a" style="left:779px;top:824px;width:1px;height:21px;background:#d6d7da"></div>
<div class="a" style="left:818px;top:824px;width:1px;height:21px;background:#d6d7da"></div>
<div class="a" style="left:857px;top:824px;width:1px;height:21px;background:#d6d7da"></div>
<div class="a" style="left:896px;top:824px;width:1px;height:21px;background:#d6d7da"></div>
<div class="a" style="left:935px;top:824px;width:1px;height:21px;background:#d6d7da"></div>
<div class="a" style="left:1327px;top:824px;width:1px;height:21px;background:#d6d7da"></div>
<div class="a" style="left:1352px;top:824px;width:1px;height:21px;background:#d6d7da"></div>
<div class="a" style="left:1420px;top:824px;width:1px;height:21px;background:#d6d7da"></div>
<div class="a" style="left:1508px;top:824px;width:1px;height:21px;background:#d6d7da"></div>
<div class="a" style="left:1591px;top:824px;width:1px;height:21px;background:#d6d7da"></div>
<div class="a" style="left:1649px;top:824px;width:1px;height:21px;background:#d6d7da"></div>
<div class="a" style="left:1708px;top:824px;width:1px;height:21px;background:#d6d7da"></div>
<div class="a" style="left:1777px;top:824px;width:1px;height:21px;background:#d6d7da"></div>
<div class="a" style="left:1875px;top:824px;width:1px;height:21px;background:#d6d7da"></div>
<div class="a" style="left:1856px;top:824px;width:19px;height:20px;background:rgba(255,255,255,.45)"></div>
<div class="t" style="left:27px;top:824.4px;width:45.4px;height:20px;line-height:20px;overflow:hidden;font-size:12.25px;color:#0c0c12;text-align:right;padding-right:.4px;">6</div>
<div class="t" style="left:75px;top:824.4px;width:114.4px;height:20px;line-height:20px;overflow:hidden;font-size:12.25px;color:#0c0c12;padding-left:2px;">2023-06-20</div>
<div class="t" style="left:192px;top:824.4px;width:76.4px;height:20px;line-height:20px;overflow:hidden;font-size:12.25px;color:#0c0c12;padding-left:2px;">IVF,ICSI</div>
<div class="t" style="left:271px;top:824.4px;width:153.4px;height:20px;line-height:20px;overflow:hidden;font-size:12.25px;color:#0c0c12;padding-left:2px;">Sharma, Amitabh</div>
<div class="t" style="left:936px;top:824.4px;width:389.4px;height:20px;line-height:20px;overflow:hidden;font-size:12.25px;color:#0c0c12;padding-left:2px;">FA 2023-07-06: 5 Ooc&nbsp;&nbsp;&nbsp;&nbsp; ET 2023-07-12: 2 Emb (12; as)</div>
<div class="t" style="left:1421px;top:824.4px;width:85.4px;height:20px;line-height:20px;overflow:hidden;font-size:12.25px;color:#0c0c12;padding-left:2px;">Yes</div>
<svg class="a" style="left:1330px;top:827px" width="19" height="15"><use href="#iCard"/></svg>
<svg class="a" style="left:1613px;top:827px" width="14" height="15"><use href="#iErr"/></svg>
<svg class="a" style="left:1672px;top:827px" width="14" height="15"><use href="#iGr"/></svg>
<svg class="a" style="left:1736px;top:827px" width="14" height="15"><use href="#iTh"/></svg>
<div class="a" style="left:1857px;top:827px;width:16px;height:15px;background:#fdfdfd;border:1px solid #dcdcdc;border-radius:4px"></div>
<svg class="a" style="left:1858px;top:827px" width="15" height="15"><use href="#iPen"/></svg>
<svg class="a" style="left:1884px;top:826px" width="12" height="16"><use href="#iLock"/></svg>
<div class="a" style="left:26px;top:845px;width:1880px;height:21px;background:#f0f6fe"></div>
<div class="a" style="left:14px;top:845px;width:12px;height:21px;background:#f0f0f0;border-right:1px solid #8c8c8c;border-bottom:1px solid #8c8c8c"></div>
<div class="a" style="left:26px;top:865px;width:1880px;height:1px;background:#e0e3e8"></div>
<div class="a" style="left:74px;top:845px;width:1px;height:21px;background:#d6d7da"></div>
<div class="a" style="left:191px;top:845px;width:1px;height:21px;background:#d6d7da"></div>
<div class="a" style="left:270px;top:845px;width:1px;height:21px;background:#d6d7da"></div>
<div class="a" style="left:426px;top:845px;width:1px;height:21px;background:#d6d7da"></div>
<div class="a" style="left:603px;top:845px;width:1px;height:21px;background:#d6d7da"></div>
<div class="a" style="left:779px;top:845px;width:1px;height:21px;background:#d6d7da"></div>
<div class="a" style="left:818px;top:845px;width:1px;height:21px;background:#d6d7da"></div>
<div class="a" style="left:857px;top:845px;width:1px;height:21px;background:#d6d7da"></div>
<div class="a" style="left:896px;top:845px;width:1px;height:21px;background:#d6d7da"></div>
<div class="a" style="left:935px;top:845px;width:1px;height:21px;background:#d6d7da"></div>
<div class="a" style="left:1327px;top:845px;width:1px;height:21px;background:#d6d7da"></div>
<div class="a" style="left:1352px;top:845px;width:1px;height:21px;background:#d6d7da"></div>
<div class="a" style="left:1420px;top:845px;width:1px;height:21px;background:#d6d7da"></div>
<div class="a" style="left:1508px;top:845px;width:1px;height:21px;background:#d6d7da"></div>
<div class="a" style="left:1591px;top:845px;width:1px;height:21px;background:#d6d7da"></div>
<div class="a" style="left:1649px;top:845px;width:1px;height:21px;background:#d6d7da"></div>
<div class="a" style="left:1708px;top:845px;width:1px;height:21px;background:#d6d7da"></div>
<div class="a" style="left:1777px;top:845px;width:1px;height:21px;background:#d6d7da"></div>
<div class="a" style="left:1875px;top:845px;width:1px;height:21px;background:#d6d7da"></div>
<div class="a" style="left:1856px;top:845px;width:19px;height:20px;background:rgba(255,255,255,.45)"></div>
<div class="t" style="left:27px;top:845.4px;width:45.4px;height:20px;line-height:20px;overflow:hidden;font-size:12.25px;color:#0c0c12;text-align:right;padding-right:.4px;">14</div>
<div class="t" style="left:75px;top:845.4px;width:114.4px;height:20px;line-height:20px;overflow:hidden;font-size:12.25px;color:#0c0c12;padding-left:2px;">2023-04-03</div>
<div class="t" style="left:192px;top:845.4px;width:76.4px;height:20px;line-height:20px;overflow:hidden;font-size:12.25px;color:#0c0c12;padding-left:2px;">IVF,ICSI</div>
<div class="t" style="left:271px;top:845.4px;width:153.4px;height:20px;line-height:20px;overflow:hidden;font-size:12.25px;color:#0c0c12;padding-left:2px;">Sharma, Amitabh</div>
<div class="t" style="left:936px;top:845.4px;width:389.4px;height:20px;line-height:20px;overflow:hidden;font-size:12.25px;color:#0c0c12;padding-left:2px;">FA 2024-04-11: 0 Ooc</div>
<svg class="a" style="left:1330px;top:848px" width="19" height="15"><use href="#iCard"/></svg>
<svg class="a" style="left:1613px;top:848px" width="14" height="15"><use href="#iErr"/></svg>
<svg class="a" style="left:1672px;top:848px" width="14" height="15"><use href="#iGr"/></svg>
<svg class="a" style="left:1736px;top:848px" width="14" height="15"><use href="#iTh"/></svg>
<div class="a" style="left:1857px;top:848px;width:16px;height:15px;background:#fdfdfd;border:1px solid #dcdcdc;border-radius:4px"></div>
<svg class="a" style="left:1858px;top:848px" width="15" height="15"><use href="#iPen"/></svg>
<svg class="a" style="left:1884px;top:847px" width="12" height="16"><use href="#iLock"/></svg>
<div class="a" style="left:14px;top:919px;width:1892px;height:22px;background:#f2f5fb;border-top:1px solid #cfd3da"></div>
<div class="t" style="left:55px;top:923px;height:16px;line-height:16px;font-size:12.2px;letter-spacing:-.2px;color:#111">Cycles: <b style="color:#1a1a8c;letter-spacing:0">14</b></div>
<div class="t" style="left:170px;top:923px;height:16px;line-height:16px;font-size:12.2px;letter-spacing:-.2px;color:#111">Aspirations: <b style="color:#1a1a8c;letter-spacing:0">7</b></div>
<div class="t" style="left:359px;top:923px;height:16px;line-height:16px;font-size:12.2px;letter-spacing:-.2px;color:#111">Pregnancies: <b style="color:#1a1a8c;letter-spacing:0">4</b></div>
<div class="t" style="left:507px;top:923px;height:16px;line-height:16px;font-size:12.2px;letter-spacing:-.2px;color:#111">Children: <b style="color:#1a1a8c;letter-spacing:0">0</b></div>
<div class="t " style="left:1774px;top:924px;height:16px;line-height:16px;font-size:12.2px;letter-spacing:-.24px;color:#111">Overall plausibility:</div>
<svg class="a" style="left:1880px;top:924px" width="14" height="14"><use href="#iErr"/></svg>
<div class="a" style="left:18px;top:952.3px;width:34px;height:22.7px;background:#fdfdfd;border:1px solid #cdcdcd;border-radius:3px;box-shadow:0 1px 1px rgba(0,0,0,.15)"></div>
<div class="a" style="left:59px;top:952.3px;width:34px;height:22.7px;background:#f6f6f6;border:1px solid #e8e8e8;border-radius:3px"></div>
<div class="a" style="left:100px;top:952.3px;width:34px;height:22.7px;background:#fdfdfd;border:1px solid #cdcdcd;border-radius:3px;box-shadow:0 1px 1px rgba(0,0,0,.15)"></div>
<div class="a" style="left:150px;top:952.3px;width:138px;height:22.7px;background:#fdfdfd;border:1px solid #cdcdcd;border-radius:3px;box-shadow:0 1px 1px rgba(0,0,0,.15)"></div>
<svg class="a" style="left:25px;top:955px" width="20" height="18" viewBox="0 0 20 18"><path d="M1 2H14M1 5H14M1 8H9" stroke="#7a7a7a" stroke-width="1.7"/><circle cx="11.6" cy="11.4" r="6.2" fill="url(#gG2)"/><path d="M11.6 7.8V15M8 11.4H15.2" stroke="#fff" stroke-width="2.1"/></svg>
<svg class="a" style="left:66px;top:955px" width="20" height="18" viewBox="0 0 20 18"><rect x="1" y="1" width="8" height="11" fill="#c4c4c4"/><rect x="5" y="4" width="9" height="12" fill="#b4b4b4" stroke="#d8d8d8" stroke-width=".8"/><circle cx="13" cy="13" r="3.6" fill="#cfcfcf"/><path d="M13 11V15M11 13H15" stroke="#f4f4f4" stroke-width="1.2"/></svg>
<svg class="a" style="left:107px;top:955px" width="20" height="18" viewBox="0 0 20 18"><path d="M1 2H14M1 5H14M1 8H9" stroke="#7a7a7a" stroke-width="1.7"/><circle cx="11.8" cy="11.4" r="6.2" fill="url(#gR2)"/><path d="M9.2 8.8L14.4 14M14.4 8.8L9.2 14" stroke="#fff" stroke-width="2.1"/></svg>
<svg class="a" style="left:171px;top:956px" width="22" height="16" viewBox="0 0 22 16"><rect x="1" y="3.5" width="11" height="10" fill="#dde2ea" stroke="#8f9db2" stroke-width=".8"/><rect x="1" y="3.5" width="11" height="2.4" fill="#5b8fd0"/><path d="M2.6 8H9M2.6 10H9" stroke="#8a98ac" stroke-width=".9"/><circle cx="13" cy="6" r="4.5" fill="#86d0f2" stroke="#8c8c8c" stroke-width="1.5"/><path d="M16 9.6 L20.4 14.2" stroke="#e09030" stroke-width="2.2"/></svg>
<div class="t " style="left:199px;top:955px;height:17px;line-height:17px;font-size:12.2px;letter-spacing:.1px">Cycle details</div>
<div class="a" style="left:1537px;top:952.3px;width:177.5px;height:22.7px;background:#fdfdfd;border:1px solid #cdcdcd;border-radius:3px;box-shadow:0 1px 1px rgba(0,0,0,.15)"></div>
<div class="a" style="left:1721px;top:952.3px;width:178px;height:22.7px;background:#fdfdfd;border:1px solid #cdcdcd;border-radius:3px;box-shadow:0 1px 1px rgba(0,0,0,.15)"></div>
<svg class="a" style="left:1545px;top:956px" width="14" height="17" viewBox="0 0 14 17"><circle cx="7" cy="5.6" r="4.6" fill="none" stroke="#111" stroke-width="1.5"/><path d="M7 10.2V16M4 13.4H10" stroke="#111" stroke-width="1.6"/></svg>
<svg class="a" style="left:1727px;top:955px" width="17" height="18" viewBox="0 0 17 18"><circle cx="6.6" cy="11" r="4.8" fill="none" stroke="#111" stroke-width="1.5"/><path d="M10 7.6 L14.4 3" fill="none" stroke="#111" stroke-width="1.6"/><path d="M10.4 1.4 L16 1 L15.6 6.8Z" fill="#111"/></svg>
<div class="t " style="left:1564px;top:955px;height:17px;line-height:17px;font-size:10.8px;letter-spacing:.05px">Open associated med. history</div>
<div class="t " style="left:1748px;top:955px;height:17px;line-height:17px;font-size:10.8px;letter-spacing:.05px">Open associated med. history</div>
<div class="a" style="left:0px;top:998px;width:1920px;height:22px;background:#e9ebf1"></div>
<div class="a" style="left:0px;top:1019px;width:1920px;height:1px;background:#70747e"></div>
<div class="t b" style="left:8px;top:1001.5px;height:17px;line-height:17px;font-size:13.1px;color:#14148a;transform:scaleY(1.07)">Clinic: Adit PC</div>
<div class="t b" style="left:147px;top:1001.5px;height:17px;line-height:17px;font-size:13.1px;color:#14148a;transform:scaleY(1.07)">User: Shetty, Adit Dr</div>
<div class="t b" style="left:321px;top:1001.5px;height:17px;line-height:17px;font-size:13.1px;color:#14148a;transform:scaleY(1.07)">Open tasks - <span style="text-decoration:underline">by me: 1</span></div>
</body></html>
